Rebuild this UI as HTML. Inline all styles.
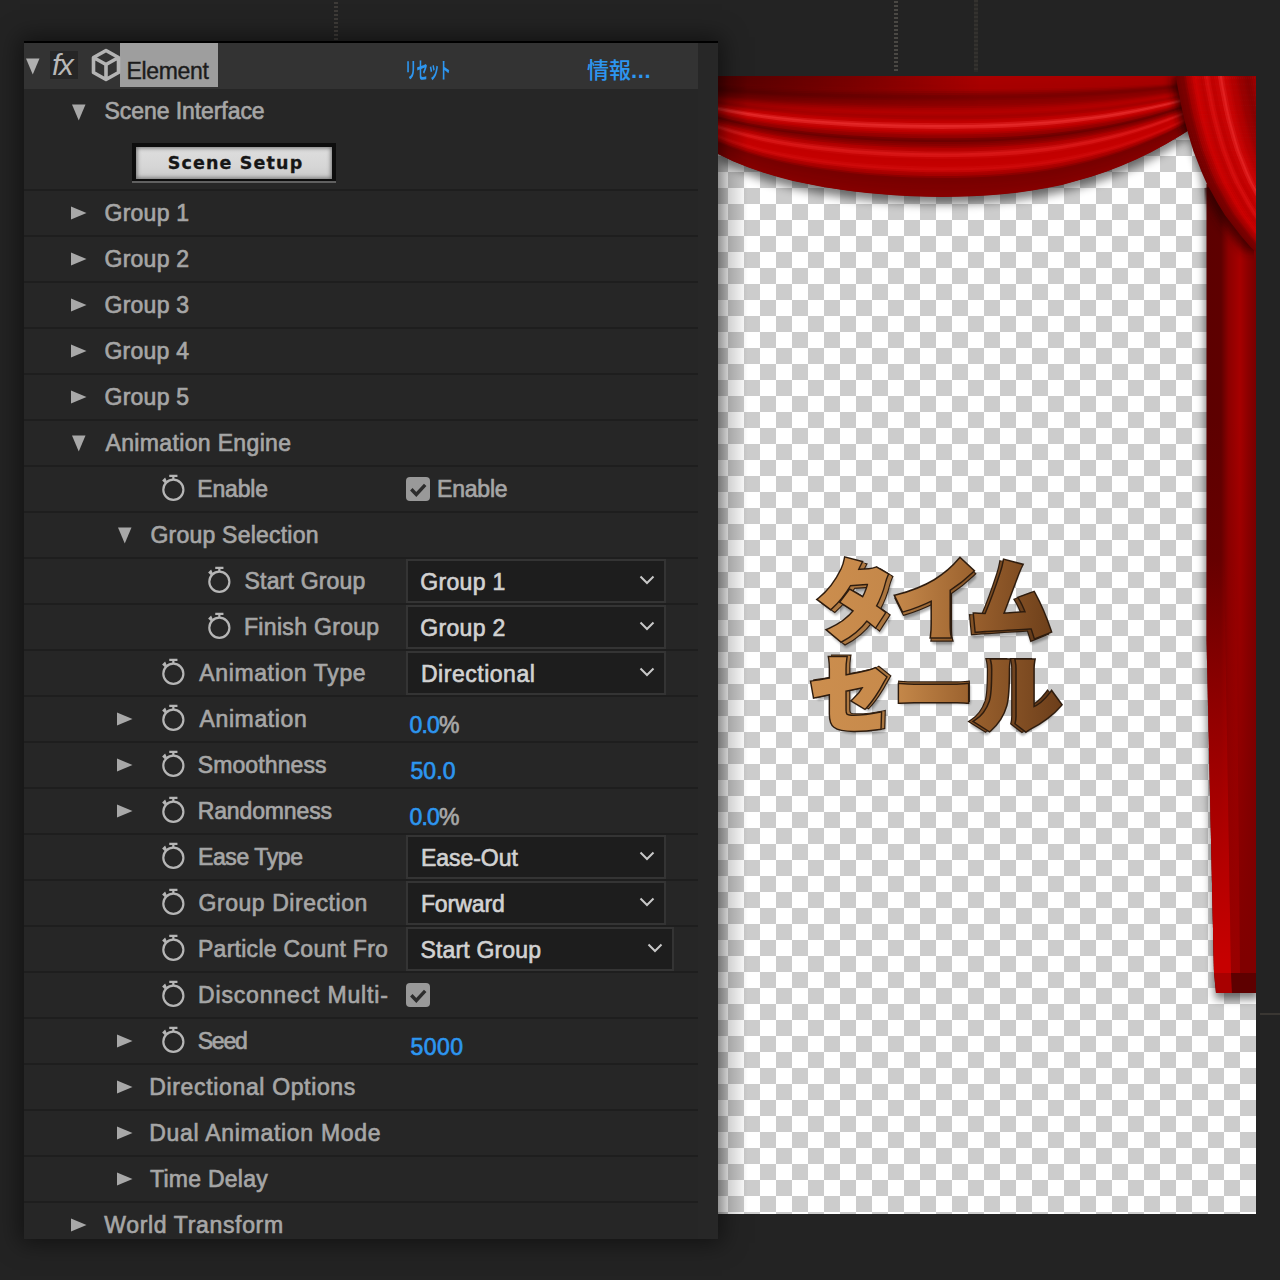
<!DOCTYPE html>
<html lang="ja"><head><meta charset="utf-8"><title>Element</title>
<style>
html,body{margin:0;padding:0;}
body{width:1280px;height:1280px;overflow:hidden;background:#232323;position:relative;font-family:"Liberation Sans", "Noto Sans CJK JP", sans-serif;}
.ab{position:absolute;display:block;}
#shadow{position:absolute;left:24px;top:41px;width:694px;height:1198px;box-shadow:0 0 22px 4px rgba(0,0,0,.5);}
#panel{position:absolute;left:24px;top:41px;width:694px;height:1198px;background:#272727;overflow:hidden;}
#panel .in{position:absolute;left:-24px;top:-41px;width:1280px;height:1280px;}
#rows{position:absolute;left:24px;top:43px;width:674px;height:1196px;background:#262626;}
#topline{position:absolute;left:24px;top:41px;width:694px;height:2px;background:#000;}
#hdr{position:absolute;left:24px;top:43px;width:674px;height:46px;background:#333333;}
#sel{position:absolute;left:120px;top:43px;width:98px;height:44px;background:#9e9e9e;}
.dv{position:absolute;left:24px;width:674px;height:2px;background:#1e1e1e;}
.lb{position:absolute;white-space:nowrap;font-size:23px;line-height:32px;height:32px;color:#a6a6a6;letter-spacing:0px;-webkit-text-stroke:0.65px #a6a6a6;}
.num{position:absolute;white-space:nowrap;font-size:23px;line-height:32px;height:32px;color:#2d96f0;-webkit-text-stroke:0.65px #2d96f0;}
.num .pc{color:#a8a8a8;-webkit-text-stroke:0.65px #a8a8a8;}
.dd{position:absolute;height:44px;box-sizing:border-box;background:#1d1d1d;border:2px solid #343434;}
.ddt{position:absolute;left:13px;top:4.5px;font-size:23px;line-height:32px;color:#d2d2d2;white-space:nowrap;-webkit-text-stroke:0.65px #d2d2d2;}
.chev{position:absolute;right:9px;top:14px;}
.cb{position:absolute;width:24px;height:24px;background:#999999;border-radius:4px;}
.cb svg{display:block;}
</style></head><body>
<div class="ab" style="left:334px;top:2px;width:4px;height:40px;background:repeating-linear-gradient(#3e3b38 0 2px,transparent 2px 4px);"></div>
<div class="ab" style="left:894px;top:1px;width:4px;height:71px;background:repeating-linear-gradient(#4a4844 0 2px,transparent 2px 4px);"></div>
<div class="ab" style="left:974px;top:0px;width:4px;height:72px;background:repeating-linear-gradient(#34322f 0 2px,#2a2927 2px 4px);"></div>
<div class="ab" style="left:1260px;top:1013px;width:20px;height:2px;background:#3a3733;"></div>
<div id="shadow"></div>
<div id="panel"><div class="in">
<div id="rows"></div>
<div id="hdr"></div>
<div id="sel"></div>
<svg class="ab" style="left:26px;top:58px" width="14" height="17" viewBox="0 0 14 17"><path d="M0 0.5 L13.5 0.5 L6.75 16.5 Z" fill="#b0b0b0"/></svg>
<div class="ab" style="left:50px;top:51px;width:28px;height:28px;background:#262626;"></div>
<div class="ab" id="fx" style="left:52px;top:49px;font-family:'Liberation Sans',sans-serif;font-style:italic;font-size:30px;line-height:32px;color:#b8b8b8;letter-spacing:-1.5px;">fx</div>
<svg class="ab" style="left:91px;top:48px" width="30" height="34" viewBox="0 0 30 34"><path d="M15 2.5 L27.5 9.5 V24.5 L15 31.5 L2.5 24.5 V9.5 Z M2.5 9.5 L15 16.5 L27.5 9.5 M15 16.5 V31.5" fill="none" stroke="#b4b4b4" stroke-width="3.6" stroke-linejoin="round"/></svg>
<div class="lb" id="el" style="left:126px;top:55px;color:#1c1c1c;-webkit-text-stroke:0.4px #1c1c1c;margin-left:0.50px;letter-spacing:-0.333px;">Element</div>
<div class="ab" id="reset" style="left:405px;top:55px;font-size:22px;line-height:32px;font-weight:700;color:#2d96f0;white-space:nowrap;transform-origin:0 50%;transform:scaleX(.52);">リセット</div>
<div class="ab" id="info" style="left:587px;top:55px;font-size:22px;line-height:32px;font-weight:500;color:#2d96f0;white-space:nowrap;">情報<span style="font-weight:bold;letter-spacing:0.6px;">...</span></div>
<svg class="ab" style="left:72px;top:103.5px" width="14" height="17" viewBox="0 0 14 17"><path d="M0 0.5 L13.5 0.5 L6.75 16.5 Z" fill="#a8a8a8"/></svg>
<div class="lb" id="si" style="left:104px;top:95px;margin-left:0.50px;letter-spacing:-0.071px;">Scene Interface</div>
<div class="ab" id="btn" style="left:132px;top:143px;width:204px;height:40px;background:#606060;"><div style="position:absolute;left:0;top:0;right:0;height:38px;background:#0d0d0d;"></div><div style="position:absolute;left:4px;top:4px;width:196px;height:32px;background:linear-gradient(#dedede,#d6d6d6 60%,#cacaca);box-shadow:inset 0 0 4px 1px #6e6e6e;"></div><div id="btnt" style="position:absolute;left:3px;right:0;top:8px;text-align:center;font-family:'DejaVu Sans','Liberation Sans',sans-serif;font-weight:bold;font-size:17.5px;line-height:24px;letter-spacing:1.15px;color:#161616;-webkit-text-stroke:0.3px #161616;">Scene Setup</div></div>
<div class="dv" style="top:189px"></div>
<div class="dv" style="top:235px"></div>
<div class="dv" style="top:281px"></div>
<div class="dv" style="top:327px"></div>
<div class="dv" style="top:373px"></div>
<div class="dv" style="top:419px"></div>
<div class="dv" style="top:465px"></div>
<div class="dv" style="top:511px"></div>
<div class="dv" style="top:557px"></div>
<div class="dv" style="top:603px"></div>
<div class="dv" style="top:649px"></div>
<div class="dv" style="top:695px"></div>
<div class="dv" style="top:741px"></div>
<div class="dv" style="top:787px"></div>
<div class="dv" style="top:833px"></div>
<div class="dv" style="top:879px"></div>
<div class="dv" style="top:925px"></div>
<div class="dv" style="top:971px"></div>
<div class="dv" style="top:1017px"></div>
<div class="dv" style="top:1063px"></div>
<div class="dv" style="top:1109px"></div>
<div class="dv" style="top:1155px"></div>
<div class="dv" style="top:1201px"></div>
<svg class="ab" style="left:71px;top:206px" width="16" height="14" viewBox="0 0 16 14"><path d="M0 0.5 L15.5 7 L0 13.5 Z" fill="#a8a8a8"/></svg>
<div class="lb" id="l0" style="left:104px;top:197px;margin-left:0.50px;letter-spacing:0.250px;">Group 1</div>
<svg class="ab" style="left:71px;top:252px" width="16" height="14" viewBox="0 0 16 14"><path d="M0 0.5 L15.5 7 L0 13.5 Z" fill="#a8a8a8"/></svg>
<div class="lb" id="l1" style="left:104px;top:243px;margin-left:0.50px;letter-spacing:0.250px;">Group 2</div>
<svg class="ab" style="left:71px;top:298px" width="16" height="14" viewBox="0 0 16 14"><path d="M0 0.5 L15.5 7 L0 13.5 Z" fill="#a8a8a8"/></svg>
<div class="lb" id="l2" style="left:104px;top:289px;margin-left:0.50px;letter-spacing:0.250px;">Group 3</div>
<svg class="ab" style="left:71px;top:344px" width="16" height="14" viewBox="0 0 16 14"><path d="M0 0.5 L15.5 7 L0 13.5 Z" fill="#a8a8a8"/></svg>
<div class="lb" id="l3" style="left:104px;top:335px;margin-left:0.50px;letter-spacing:0.233px;">Group 4</div>
<svg class="ab" style="left:71px;top:390px" width="16" height="14" viewBox="0 0 16 14"><path d="M0 0.5 L15.5 7 L0 13.5 Z" fill="#a8a8a8"/></svg>
<div class="lb" id="l4" style="left:104px;top:381px;margin-left:0.50px;letter-spacing:0.250px;">Group 5</div>
<svg class="ab" style="left:72px;top:435px" width="14" height="17" viewBox="0 0 14 17"><path d="M0 0.5 L13.5 0.5 L6.75 16.5 Z" fill="#a8a8a8"/></svg>
<div class="lb" id="l5" style="left:104px;top:427px;margin-left:1.50px;letter-spacing:0.350px;">Animation Engine</div>
<svg class="ab" style="left:159.75px;top:474.25px" width="28" height="30" viewBox="0 0 28 30"><circle cx="13.35" cy="15.75" r="10.05" fill="none" stroke="#b6b6b6" stroke-width="2.2"/><path d="M9.25 1.8 H17.45 M13.35 1.8 V6" fill="none" stroke="#b6b6b6" stroke-width="2.2"/><path d="M2.1 6.4 L5.1 3.4 L7 7.6 L4.6 9 Z" fill="#b6b6b6"/></svg>
<div class="lb" id="l6" style="left:198px;top:473px;margin-left:-0.75px;letter-spacing:-0.150px;">Enable</div>
<svg class="ab" style="left:118px;top:527px" width="14" height="17" viewBox="0 0 14 17"><path d="M0 0.5 L13.5 0.5 L6.75 16.5 Z" fill="#a8a8a8"/></svg>
<div class="lb" id="l7" style="left:150px;top:519px;margin-left:0.50px;letter-spacing:0.214px;">Group Selection</div>
<svg class="ab" style="left:205.75px;top:566.25px" width="28" height="30" viewBox="0 0 28 30"><circle cx="13.35" cy="15.75" r="10.05" fill="none" stroke="#b6b6b6" stroke-width="2.2"/><path d="M9.25 1.8 H17.45 M13.35 1.8 V6" fill="none" stroke="#b6b6b6" stroke-width="2.2"/><path d="M2.1 6.4 L5.1 3.4 L7 7.6 L4.6 9 Z" fill="#b6b6b6"/></svg>
<div class="lb" id="l8" style="left:244px;top:565px;margin-left:0.50px;letter-spacing:0.200px;">Start Group</div>
<svg class="ab" style="left:205.75px;top:612.25px" width="28" height="30" viewBox="0 0 28 30"><circle cx="13.35" cy="15.75" r="10.05" fill="none" stroke="#b6b6b6" stroke-width="2.2"/><path d="M9.25 1.8 H17.45 M13.35 1.8 V6" fill="none" stroke="#b6b6b6" stroke-width="2.2"/><path d="M2.1 6.4 L5.1 3.4 L7 7.6 L4.6 9 Z" fill="#b6b6b6"/></svg>
<div class="lb" id="l9" style="left:244px;top:611px;margin-left:0.00px;letter-spacing:0.318px;">Finish Group</div>
<svg class="ab" style="left:159.75px;top:658.25px" width="28" height="30" viewBox="0 0 28 30"><circle cx="13.35" cy="15.75" r="10.05" fill="none" stroke="#b6b6b6" stroke-width="2.2"/><path d="M9.25 1.8 H17.45 M13.35 1.8 V6" fill="none" stroke="#b6b6b6" stroke-width="2.2"/><path d="M2.1 6.4 L5.1 3.4 L7 7.6 L4.6 9 Z" fill="#b6b6b6"/></svg>
<div class="lb" id="l10" style="left:198px;top:657px;margin-left:1.25px;letter-spacing:0.635px;">Animation Type</div>
<svg class="ab" style="left:117px;top:712px" width="16" height="14" viewBox="0 0 16 14"><path d="M0 0.5 L15.5 7 L0 13.5 Z" fill="#a8a8a8"/></svg>
<svg class="ab" style="left:159.75px;top:704.25px" width="28" height="30" viewBox="0 0 28 30"><circle cx="13.35" cy="15.75" r="10.05" fill="none" stroke="#b6b6b6" stroke-width="2.2"/><path d="M9.25 1.8 H17.45 M13.35 1.8 V6" fill="none" stroke="#b6b6b6" stroke-width="2.2"/><path d="M2.1 6.4 L5.1 3.4 L7 7.6 L4.6 9 Z" fill="#b6b6b6"/></svg>
<div class="lb" id="l11" style="left:198px;top:703px;margin-left:1.50px;letter-spacing:0.625px;">Animation</div>
<svg class="ab" style="left:117px;top:758px" width="16" height="14" viewBox="0 0 16 14"><path d="M0 0.5 L15.5 7 L0 13.5 Z" fill="#a8a8a8"/></svg>
<svg class="ab" style="left:159.75px;top:750.25px" width="28" height="30" viewBox="0 0 28 30"><circle cx="13.35" cy="15.75" r="10.05" fill="none" stroke="#b6b6b6" stroke-width="2.2"/><path d="M9.25 1.8 H17.45 M13.35 1.8 V6" fill="none" stroke="#b6b6b6" stroke-width="2.2"/><path d="M2.1 6.4 L5.1 3.4 L7 7.6 L4.6 9 Z" fill="#b6b6b6"/></svg>
<div class="lb" id="l12" style="left:198px;top:749px;margin-left:-0.25px;letter-spacing:0.111px;">Smoothness</div>
<svg class="ab" style="left:117px;top:804px" width="16" height="14" viewBox="0 0 16 14"><path d="M0 0.5 L15.5 7 L0 13.5 Z" fill="#a8a8a8"/></svg>
<svg class="ab" style="left:159.75px;top:796.25px" width="28" height="30" viewBox="0 0 28 30"><circle cx="13.35" cy="15.75" r="10.05" fill="none" stroke="#b6b6b6" stroke-width="2.2"/><path d="M9.25 1.8 H17.45 M13.35 1.8 V6" fill="none" stroke="#b6b6b6" stroke-width="2.2"/><path d="M2.1 6.4 L5.1 3.4 L7 7.6 L4.6 9 Z" fill="#b6b6b6"/></svg>
<div class="lb" id="l13" style="left:198px;top:795px;margin-left:-0.25px;letter-spacing:-0.139px;">Randomness</div>
<svg class="ab" style="left:159.75px;top:842.25px" width="28" height="30" viewBox="0 0 28 30"><circle cx="13.35" cy="15.75" r="10.05" fill="none" stroke="#b6b6b6" stroke-width="2.2"/><path d="M9.25 1.8 H17.45 M13.35 1.8 V6" fill="none" stroke="#b6b6b6" stroke-width="2.2"/><path d="M2.1 6.4 L5.1 3.4 L7 7.6 L4.6 9 Z" fill="#b6b6b6"/></svg>
<div class="lb" id="l14" style="left:198px;top:841px;margin-left:0.00px;letter-spacing:-0.406px;">Ease Type</div>
<svg class="ab" style="left:159.75px;top:888.25px" width="28" height="30" viewBox="0 0 28 30"><circle cx="13.35" cy="15.75" r="10.05" fill="none" stroke="#b6b6b6" stroke-width="2.2"/><path d="M9.25 1.8 H17.45 M13.35 1.8 V6" fill="none" stroke="#b6b6b6" stroke-width="2.2"/><path d="M2.1 6.4 L5.1 3.4 L7 7.6 L4.6 9 Z" fill="#b6b6b6"/></svg>
<div class="lb" id="l15" style="left:198px;top:887px;margin-left:0.50px;letter-spacing:0.554px;">Group Direction</div>
<svg class="ab" style="left:159.75px;top:934.25px" width="28" height="30" viewBox="0 0 28 30"><circle cx="13.35" cy="15.75" r="10.05" fill="none" stroke="#b6b6b6" stroke-width="2.2"/><path d="M9.25 1.8 H17.45 M13.35 1.8 V6" fill="none" stroke="#b6b6b6" stroke-width="2.2"/><path d="M2.1 6.4 L5.1 3.4 L7 7.6 L4.6 9 Z" fill="#b6b6b6"/></svg>
<div class="lb" id="l16" style="left:198px;top:933px;margin-left:0.00px;letter-spacing:0.265px;">Particle Count Fro</div>
<svg class="ab" style="left:159.75px;top:980.25px" width="28" height="30" viewBox="0 0 28 30"><circle cx="13.35" cy="15.75" r="10.05" fill="none" stroke="#b6b6b6" stroke-width="2.2"/><path d="M9.25 1.8 H17.45 M13.35 1.8 V6" fill="none" stroke="#b6b6b6" stroke-width="2.2"/><path d="M2.1 6.4 L5.1 3.4 L7 7.6 L4.6 9 Z" fill="#b6b6b6"/></svg>
<div class="lb" id="l17" style="left:198px;top:979px;margin-left:0.00px;letter-spacing:0.844px;">Disconnect Multi-</div>
<svg class="ab" style="left:117px;top:1034px" width="16" height="14" viewBox="0 0 16 14"><path d="M0 0.5 L15.5 7 L0 13.5 Z" fill="#a8a8a8"/></svg>
<svg class="ab" style="left:159.75px;top:1026.25px" width="28" height="30" viewBox="0 0 28 30"><circle cx="13.35" cy="15.75" r="10.05" fill="none" stroke="#b6b6b6" stroke-width="2.2"/><path d="M9.25 1.8 H17.45 M13.35 1.8 V6" fill="none" stroke="#b6b6b6" stroke-width="2.2"/><path d="M2.1 6.4 L5.1 3.4 L7 7.6 L4.6 9 Z" fill="#b6b6b6"/></svg>
<div class="lb" id="l18" style="left:198px;top:1025px;margin-left:-0.25px;letter-spacing:-1.250px;">Seed</div>
<svg class="ab" style="left:117px;top:1080px" width="16" height="14" viewBox="0 0 16 14"><path d="M0 0.5 L15.5 7 L0 13.5 Z" fill="#a8a8a8"/></svg>
<div class="lb" id="l19" style="left:150px;top:1071px;margin-left:-0.75px;letter-spacing:0.653px;">Directional Options</div>
<svg class="ab" style="left:117px;top:1126px" width="16" height="14" viewBox="0 0 16 14"><path d="M0 0.5 L15.5 7 L0 13.5 Z" fill="#a8a8a8"/></svg>
<div class="lb" id="l20" style="left:150px;top:1117px;margin-left:-0.75px;letter-spacing:0.708px;">Dual Animation Mode</div>
<svg class="ab" style="left:117px;top:1172px" width="16" height="14" viewBox="0 0 16 14"><path d="M0 0.5 L15.5 7 L0 13.5 Z" fill="#a8a8a8"/></svg>
<div class="lb" id="l21" style="left:150px;top:1163px;margin-left:0.00px;letter-spacing:0.250px;">Time Delay</div>
<svg class="ab" style="left:71px;top:1218px" width="16" height="14" viewBox="0 0 16 14"><path d="M0 0.5 L15.5 7 L0 13.5 Z" fill="#a8a8a8"/></svg>
<div class="lb" id="l22" style="left:104px;top:1209px;margin-left:0.25px;letter-spacing:0.661px;">World Transform</div>
<div class="cb" style="left:406px;top:477px"><svg width="24" height="24" viewBox="0 0 24 24"><path d="M5.3 12.3 L10.3 17.5 L19.2 7.9" fill="none" stroke="#2c2c2c" stroke-width="3.4"/></svg></div>
<div class="lb" id="v6" style="left:438px;top:473px;margin-left:-0.90px;letter-spacing:-0.220px;">Enable</div>
<div class="dd" style="left:406px;top:559px;width:260px"><span class="ddt" id="d8" style="margin-left:-0.80px;letter-spacing:0.342px;">Group 1</span><svg class="chev" width="16" height="10" viewBox="0 0 16 10"><path d="M1.5 1.5 L8 8 L14.5 1.5" fill="none" stroke="#c8c8c8" stroke-width="2"/></svg></div>
<div class="dd" style="left:406px;top:605px;width:260px"><span class="ddt" id="d9" style="margin-left:-0.80px;letter-spacing:0.342px;">Group 2</span><svg class="chev" width="16" height="10" viewBox="0 0 16 10"><path d="M1.5 1.5 L8 8 L14.5 1.5" fill="none" stroke="#c8c8c8" stroke-width="2"/></svg></div>
<div class="dd" style="left:406px;top:651px;width:260px"><span class="ddt" id="d10" style="margin-left:-0.10px;letter-spacing:0.530px;">Directional</span><svg class="chev" width="16" height="10" viewBox="0 0 16 10"><path d="M1.5 1.5 L8 8 L14.5 1.5" fill="none" stroke="#c8c8c8" stroke-width="2"/></svg></div>
<div class="num" id="n11" style="left:408px;top:709px;margin-left:1.60px;letter-spacing:-0.867px;">0.0<span class="pc">%</span></div>
<div class="num" id="n12" style="left:408px;top:755px;margin-left:2.40px;letter-spacing:0.133px;">50.0</div>
<div class="num" id="n13" style="left:408px;top:801px;margin-left:1.60px;letter-spacing:-0.867px;">0.0<span class="pc">%</span></div>
<div class="dd" style="left:406px;top:835px;width:260px"><span class="ddt" id="d14" style="margin-left:-0.10px;letter-spacing:-0.029px;">Ease-Out</span><svg class="chev" width="16" height="10" viewBox="0 0 16 10"><path d="M1.5 1.5 L8 8 L14.5 1.5" fill="none" stroke="#c8c8c8" stroke-width="2"/></svg></div>
<div class="dd" style="left:406px;top:881px;width:260px"><span class="ddt" id="d15" style="margin-left:-0.10px;letter-spacing:-0.083px;">Forward</span><svg class="chev" width="16" height="10" viewBox="0 0 16 10"><path d="M1.5 1.5 L8 8 L14.5 1.5" fill="none" stroke="#c8c8c8" stroke-width="2"/></svg></div>
<div class="dd" style="left:406px;top:927px;width:268px"><span class="ddt" id="d16" style="margin-left:-0.50px;letter-spacing:0.170px;">Start Group</span><svg class="chev" width="16" height="10" viewBox="0 0 16 10"><path d="M1.5 1.5 L8 8 L14.5 1.5" fill="none" stroke="#c8c8c8" stroke-width="2"/></svg></div>
<div class="cb" style="left:406px;top:983px"><svg width="24" height="24" viewBox="0 0 24 24"><path d="M5.3 12.3 L10.3 17.5 L19.2 7.9" fill="none" stroke="#2c2c2c" stroke-width="3.4"/></svg></div>
<div class="num" id="n18" style="left:408px;top:1031px;margin-left:2.40px;letter-spacing:0.467px;">5000</div>
</div></div>
<div id="topline"></div>
<svg id="cv" class="ab" style="left:718px;top:76px" width="538" height="1138" viewBox="718 76 538 1138">
<defs>
<pattern id="chk" x="728" y="76" width="32" height="32" patternUnits="userSpaceOnUse"><rect width="32" height="32" fill="#fff"/><rect width="16" height="16" fill="#cccccc"/><rect x="16" y="16" width="16" height="16" fill="#cccccc"/></pattern>
<linearGradient id="lsh" x1="0" x2="1" y1="0" y2="0"><stop offset="0" stop-color="#000" stop-opacity=".42"/><stop offset=".35" stop-color="#000" stop-opacity=".18"/><stop offset="1" stop-color="#000" stop-opacity="0"/></linearGradient>
<filter id="ds" x="-10%" y="-10%" width="120%" height="140%"><feGaussianBlur stdDeviation="5"/></filter>
<filter id="ds2" x="-50%" y="-5%" width="200%" height="110%"><feGaussianBlur stdDeviation="4"/></filter>
<filter id="b5" x="-50%" y="-20%" width="200%" height="140%"><feGaussianBlur stdDeviation="5"/></filter><filter id="b1" x="-20%" y="-20%" width="140%" height="140%"><feGaussianBlur stdDeviation="1.2"/></filter>
<linearGradient id="back" gradientUnits="userSpaceOnUse" x1="1206" x2="1256" y1="0" y2="0"><stop offset="0" stop-color="#5c0000"/><stop offset=".3" stop-color="#5e0000"/><stop offset=".45" stop-color="#8c0000"/><stop offset=".68" stop-color="#a60000"/><stop offset=".85" stop-color="#8a0000"/><stop offset="1" stop-color="#780000"/></linearGradient>
<linearGradient id="backlo" gradientUnits="userSpaceOnUse" x1="0" x2="0" y1="420" y2="960"><stop offset="0" stop-color="#800000" stop-opacity="0"/><stop offset="1" stop-color="#800000" stop-opacity="1"/></linearGradient>
<linearGradient id="stripe" gradientUnits="userSpaceOnUse" x1="0" x2="0" y1="560" y2="960"><stop offset="0" stop-color="#c40000" stop-opacity="0"/><stop offset="1" stop-color="#c60000" stop-opacity="1"/></linearGradient>
<linearGradient id="txg" gradientUnits="userSpaceOnUse" x1="810" x2="1062" y1="0" y2="0"><stop offset="0" stop-color="#c98a4a"/><stop offset=".3" stop-color="#c88b4c"/><stop offset=".6" stop-color="#9a5f2c"/><stop offset="1" stop-color="#6e401c"/></linearGradient>
<linearGradient id="vald" gradientUnits="userSpaceOnUse" x1="718" x2="980" y1="0" y2="0"><stop offset="0" stop-color="#2a0000" stop-opacity=".72"/><stop offset=".5" stop-color="#2a0000" stop-opacity=".4"/><stop offset="1" stop-color="#2a0000" stop-opacity="0"/></linearGradient>
<linearGradient id="valv" gradientUnits="userSpaceOnUse" x1="0" x2="0" y1="76" y2="112"><stop offset="0" stop-color="#fff" stop-opacity="1"/><stop offset=".3" stop-color="#fff" stop-opacity=".9"/><stop offset="1" stop-color="#fff" stop-opacity="0"/></linearGradient>
<clipPath id="cc"><rect x="718" y="76" width="538" height="1138"/></clipPath>
<clipPath id="cb"><path d="M1206.5 184 L1206.5 640 L1214 973 L1256 973 L1256 176 Z"/></clipPath></defs>
<rect x="718" y="76" width="538" height="1138" fill="url(#chk)"/>
<g clip-path="url(#cc)">
<path d="M718 76 L718.0 161.1 L732.9 168.2 L747.9 174.3 L762.8 179.5 L777.8 184.0 L792.7 187.9 L807.6 191.1 L822.6 193.9 L837.5 196.3 L852.4 198.3 L867.4 200.0 L882.3 201.3 L897.2 202.4 L912.2 203.2 L927.1 203.7 L942.1 203.9 L957.0 203.8 L971.9 203.3 L986.9 202.5 L1001.8 201.3 L1016.8 199.7 L1031.7 197.6 L1046.6 195.0 L1061.6 191.9 L1076.5 188.1 L1091.4 183.8 L1106.4 178.7 L1121.3 173.0 L1136.2 166.5 L1151.2 159.2 L1166.1 151.1 L1181.1 142.2 L1196.0 132.4 L1196 76 Z" fill="#000" opacity=".5" filter="url(#ds)"/>
<path d="M1180 76 L1190 132 L1204 172 L1208 200 L1208 640 L1217 975 L1218 996 L1262 996 L1262 76 Z" fill="#000" opacity=".5" filter="url(#ds2)" transform="translate(-3,3)"/>
<path d="M718 76.0 L733 76.0 L748 76.0 L763 76.0 L778 76.0 L793 76.0 L808 76.0 L823 76.0 L838 76.0 L852 76.0 L867 76.0 L882 76.0 L897 76.0 L912 76.0 L927 76.0 L942 76.0 L957 76.0 L972 76.0 L987 76.0 L1002 76.0 L1017 76.0 L1032 76.0 L1047 76.0 L1062 76.0 L1076 76.0 L1091 76.0 L1106 76.0 L1121 76.0 L1136 76.0 L1151 76.0 L1166 76.0 L1181 76.0 L1196 76.0 L1196 77.4 L1181 77.6 L1166 77.9 L1151 78.1 L1136 78.3 L1121 78.5 L1106 78.6 L1091 78.8 L1076 78.9 L1062 79.0 L1047 79.1 L1032 79.2 L1017 79.2 L1002 79.3 L987 79.3 L972 79.3 L957 79.3 L942 79.3 L927 79.3 L912 79.3 L897 79.3 L882 79.3 L867 79.2 L852 79.2 L838 79.1 L823 79.1 L808 79.0 L793 78.9 L778 78.8 L763 78.7 L748 78.5 L733 78.4 L718 78.2Z" fill="#aa0000"/>
<path d="M718 77.2 L733 77.3 L748 77.4 L763 77.5 L778 77.6 L793 77.6 L808 77.7 L823 77.7 L838 77.8 L852 77.8 L867 77.8 L882 77.8 L897 77.9 L912 77.9 L927 77.9 L942 77.9 L957 77.9 L972 77.9 L987 77.9 L1002 77.8 L1017 77.8 L1032 77.8 L1047 77.7 L1062 77.7 L1076 77.6 L1091 77.6 L1106 77.5 L1121 77.4 L1136 77.3 L1151 77.2 L1166 77.1 L1181 76.9 L1196 76.8 L1196 78.1 L1181 78.6 L1166 78.9 L1151 79.3 L1136 79.6 L1121 79.9 L1106 80.1 L1091 80.4 L1076 80.5 L1062 80.7 L1047 80.8 L1032 81.0 L1017 81.0 L1002 81.1 L987 81.2 L972 81.2 L957 81.2 L942 81.2 L927 81.2 L912 81.2 L897 81.2 L882 81.1 L867 81.1 L852 81.0 L838 80.9 L823 80.8 L808 80.7 L793 80.5 L778 80.4 L763 80.2 L748 79.9 L733 79.7 L718 79.4Z" fill="#a90000"/>
<path d="M718 78.4 L733 78.7 L748 78.9 L763 79.0 L778 79.2 L793 79.3 L808 79.4 L823 79.5 L838 79.5 L852 79.6 L867 79.7 L882 79.7 L897 79.7 L912 79.8 L927 79.8 L942 79.8 L957 79.8 L972 79.8 L987 79.7 L1002 79.7 L1017 79.6 L1032 79.6 L1047 79.5 L1062 79.4 L1076 79.3 L1091 79.1 L1106 79.0 L1121 78.8 L1136 78.6 L1151 78.4 L1166 78.1 L1181 77.8 L1196 77.5 L1196 78.9 L1181 79.5 L1166 80.0 L1151 80.5 L1136 80.9 L1121 81.3 L1106 81.6 L1091 81.9 L1076 82.2 L1062 82.4 L1047 82.6 L1032 82.7 L1017 82.9 L1002 83.0 L987 83.0 L972 83.1 L957 83.1 L942 83.1 L927 83.1 L912 83.1 L897 83.0 L882 83.0 L867 82.9 L852 82.8 L838 82.7 L823 82.5 L808 82.4 L793 82.2 L778 81.9 L763 81.7 L748 81.4 L733 81.0 L718 80.6Z" fill="#a90000"/>
<path d="M718 79.7 L733 80.0 L748 80.3 L763 80.5 L778 80.7 L793 80.9 L808 81.1 L823 81.2 L838 81.3 L852 81.4 L867 81.5 L882 81.5 L897 81.6 L912 81.6 L927 81.7 L942 81.7 L957 81.7 L972 81.6 L987 81.6 L1002 81.5 L1017 81.5 L1032 81.4 L1047 81.2 L1062 81.1 L1076 80.9 L1091 80.7 L1106 80.5 L1121 80.2 L1136 79.9 L1151 79.6 L1166 79.2 L1181 78.8 L1196 78.3 L1196 79.7 L1181 80.4 L1166 81.1 L1151 81.7 L1136 82.2 L1121 82.7 L1106 83.1 L1091 83.5 L1076 83.8 L1062 84.1 L1047 84.3 L1032 84.5 L1017 84.7 L1002 84.8 L987 84.9 L972 85.0 L957 85.0 L942 85.0 L927 85.0 L912 85.0 L897 84.9 L882 84.8 L867 84.7 L852 84.6 L838 84.4 L823 84.3 L808 84.1 L793 83.8 L778 83.5 L763 83.2 L748 82.8 L733 82.3 L718 81.8Z" fill="#a80000"/>
<path d="M718 80.9 L733 81.3 L748 81.7 L763 82.0 L778 82.3 L793 82.6 L808 82.8 L823 82.9 L838 83.1 L852 83.2 L867 83.3 L882 83.4 L897 83.5 L912 83.5 L927 83.5 L942 83.6 L957 83.5 L972 83.5 L987 83.5 L1002 83.4 L1017 83.3 L1032 83.2 L1047 83.0 L1062 82.8 L1076 82.6 L1091 82.3 L1106 82.0 L1121 81.6 L1136 81.2 L1151 80.8 L1166 80.3 L1181 79.7 L1196 79.1 L1196 80.5 L1181 81.3 L1166 82.1 L1151 82.9 L1136 83.5 L1121 84.1 L1106 84.6 L1091 85.1 L1076 85.5 L1062 85.8 L1047 86.1 L1032 86.3 L1017 86.5 L1002 86.7 L987 86.8 L972 86.8 L957 86.9 L942 86.9 L927 86.9 L912 86.8 L897 86.8 L882 86.7 L867 86.5 L852 86.4 L838 86.2 L823 86.0 L808 85.7 L793 85.4 L778 85.1 L763 84.7 L748 84.2 L733 83.7 L718 83.0Z" fill="#a70000"/>
<path d="M718 82.1 L733 82.7 L748 83.1 L763 83.5 L778 83.9 L793 84.2 L808 84.4 L823 84.7 L838 84.9 L852 85.0 L867 85.1 L882 85.2 L897 85.3 L912 85.4 L927 85.4 L942 85.4 L957 85.4 L972 85.4 L987 85.3 L1002 85.2 L1017 85.1 L1032 85.0 L1047 84.7 L1062 84.5 L1076 84.2 L1091 83.9 L1106 83.5 L1121 83.0 L1136 82.5 L1151 82.0 L1166 81.3 L1181 80.6 L1196 79.9 L1196 81.2 L1181 82.3 L1166 83.2 L1151 84.1 L1136 84.8 L1121 85.5 L1106 86.1 L1091 86.7 L1076 87.1 L1062 87.5 L1047 87.8 L1032 88.1 L1017 88.3 L1002 88.5 L987 88.6 L972 88.7 L957 88.8 L942 88.8 L927 88.8 L912 88.7 L897 88.6 L882 88.5 L867 88.4 L852 88.2 L838 88.0 L823 87.7 L808 87.4 L793 87.1 L778 86.7 L763 86.2 L748 85.7 L733 85.0 L718 84.3Z" fill="#a60000"/>
<path d="M718 83.3 L733 84.0 L748 84.6 L763 85.0 L778 85.5 L793 85.8 L808 86.1 L823 86.4 L838 86.6 L852 86.8 L867 87.0 L882 87.1 L897 87.2 L912 87.3 L927 87.3 L942 87.3 L957 87.3 L972 87.3 L987 87.2 L1002 87.1 L1017 86.9 L1032 86.7 L1047 86.5 L1062 86.2 L1076 85.9 L1091 85.4 L1106 85.0 L1121 84.4 L1136 83.8 L1151 83.1 L1166 82.4 L1181 81.5 L1196 80.6 L1196 82.0 L1181 83.2 L1166 84.3 L1151 85.2 L1136 86.1 L1121 86.9 L1106 87.6 L1091 88.2 L1076 88.8 L1062 89.2 L1047 89.6 L1032 89.9 L1017 90.2 L1002 90.4 L987 90.5 L972 90.6 L957 90.7 L942 90.7 L927 90.6 L912 90.6 L897 90.5 L882 90.4 L867 90.2 L852 90.0 L838 89.8 L823 89.5 L808 89.1 L793 88.7 L778 88.3 L763 87.7 L748 87.1 L733 86.3 L718 85.5Z" fill="#a60000"/>
<path d="M718 84.5 L733 85.3 L748 86.0 L763 86.6 L778 87.0 L793 87.5 L808 87.8 L823 88.1 L838 88.4 L852 88.6 L867 88.8 L882 88.9 L897 89.1 L912 89.1 L927 89.2 L942 89.2 L957 89.2 L972 89.2 L987 89.1 L1002 88.9 L1017 88.8 L1032 88.5 L1047 88.2 L1062 87.9 L1076 87.5 L1091 87.0 L1106 86.5 L1121 85.8 L1136 85.1 L1151 84.3 L1166 83.5 L1181 82.5 L1196 81.4 L1196 82.8 L1181 84.1 L1166 85.3 L1151 86.4 L1136 87.4 L1121 88.3 L1106 89.1 L1091 89.8 L1076 90.4 L1062 90.9 L1047 91.3 L1032 91.7 L1017 92.0 L1002 92.2 L987 92.4 L972 92.5 L957 92.5 L942 92.6 L927 92.5 L912 92.5 L897 92.4 L882 92.2 L867 92.0 L852 91.8 L838 91.5 L823 91.2 L808 90.8 L793 90.4 L778 89.8 L763 89.2 L748 88.5 L733 87.7 L718 86.7Z" fill="#a00000"/>
<path d="M718 85.8 L733 86.6 L748 87.4 L763 88.1 L778 88.6 L793 89.1 L808 89.5 L823 89.9 L838 90.2 L852 90.4 L867 90.6 L882 90.8 L897 90.9 L912 91.0 L927 91.1 L942 91.1 L957 91.1 L972 91.0 L987 90.9 L1002 90.8 L1017 90.6 L1032 90.3 L1047 90.0 L1062 89.6 L1076 89.1 L1091 88.6 L1106 88.0 L1121 87.2 L1136 86.4 L1151 85.5 L1166 84.5 L1181 83.4 L1196 82.2 L1196 83.5 L1181 85.0 L1166 86.4 L1151 87.6 L1136 88.7 L1121 89.7 L1106 90.6 L1091 91.4 L1076 92.0 L1062 92.6 L1047 93.1 L1032 93.5 L1017 93.8 L1002 94.1 L987 94.2 L972 94.4 L957 94.4 L942 94.4 L927 94.4 L912 94.3 L897 94.2 L882 94.1 L867 93.9 L852 93.6 L838 93.3 L823 92.9 L808 92.5 L793 92.0 L778 91.4 L763 90.7 L748 89.9 L733 89.0 L718 87.9Z" fill="#950000"/>
<path d="M718 87.0 L733 88.0 L748 88.8 L763 89.6 L778 90.2 L793 90.7 L808 91.2 L823 91.6 L838 91.9 L852 92.2 L867 92.4 L882 92.6 L897 92.8 L912 92.9 L927 93.0 L942 93.0 L957 93.0 L972 92.9 L987 92.8 L1002 92.6 L1017 92.4 L1032 92.1 L1047 91.7 L1062 91.3 L1076 90.8 L1091 90.2 L1106 89.5 L1121 88.7 L1136 87.7 L1151 86.7 L1166 85.6 L1181 84.3 L1196 83.0 L1196 84.3 L1181 86.0 L1166 87.5 L1151 88.8 L1136 90.0 L1121 91.1 L1106 92.1 L1091 93.0 L1076 93.7 L1062 94.3 L1047 94.8 L1032 95.3 L1017 95.6 L1002 95.9 L987 96.1 L972 96.2 L957 96.3 L942 96.3 L927 96.3 L912 96.2 L897 96.1 L882 95.9 L867 95.7 L852 95.4 L838 95.1 L823 94.7 L808 94.2 L793 93.6 L778 93.0 L763 92.2 L748 91.4 L733 90.3 L718 89.1Z" fill="#880000"/>
<path d="M718 88.2 L733 89.3 L748 90.3 L763 91.1 L778 91.8 L793 92.4 L808 92.9 L823 93.3 L838 93.7 L852 94.0 L867 94.3 L882 94.5 L897 94.7 L912 94.8 L927 94.9 L942 94.9 L957 94.9 L972 94.8 L987 94.7 L1002 94.5 L1017 94.2 L1032 93.9 L1047 93.5 L1062 93.0 L1076 92.4 L1091 91.7 L1106 91.0 L1121 90.1 L1136 89.0 L1151 87.9 L1166 86.6 L1181 85.2 L1196 83.7 L1196 85.1 L1181 86.9 L1166 88.5 L1151 90.0 L1136 91.3 L1121 92.5 L1106 93.6 L1091 94.5 L1076 95.3 L1062 96.0 L1047 96.6 L1032 97.1 L1017 97.5 L1002 97.8 L987 98.0 L972 98.1 L957 98.2 L942 98.2 L927 98.2 L912 98.1 L897 98.0 L882 97.8 L867 97.5 L852 97.2 L838 96.8 L823 96.4 L808 95.9 L793 95.3 L778 94.6 L763 93.7 L748 92.8 L733 91.7 L718 90.4Z" fill="#7d0000"/>
<path d="M718 89.4 L733 90.6 L748 91.7 L763 92.6 L778 93.4 L793 94.0 L808 94.6 L823 95.1 L838 95.5 L852 95.8 L867 96.1 L882 96.3 L897 96.5 L912 96.7 L927 96.7 L942 96.8 L957 96.8 L972 96.7 L987 96.5 L1002 96.3 L1017 96.1 L1032 95.7 L1047 95.2 L1062 94.7 L1076 94.1 L1091 93.3 L1106 92.5 L1121 91.5 L1136 90.3 L1151 89.1 L1166 87.7 L1181 86.2 L1196 84.5 L1196 85.9 L1181 87.8 L1166 89.6 L1151 91.2 L1136 92.7 L1121 93.9 L1106 95.1 L1091 96.1 L1076 97.0 L1062 97.7 L1047 98.3 L1032 98.9 L1017 99.3 L1002 99.6 L987 99.8 L972 100.0 L957 100.1 L942 100.1 L927 100.1 L912 100.0 L897 99.8 L882 99.6 L867 99.3 L852 99.0 L838 98.6 L823 98.1 L808 97.6 L793 96.9 L778 96.2 L763 95.3 L748 94.2 L733 93.0 L718 91.6Z" fill="#7a0000"/>
<path d="M718 90.6 L733 92.0 L748 93.1 L763 94.1 L778 94.9 L793 95.7 L808 96.3 L823 96.8 L838 97.2 L852 97.6 L867 97.9 L882 98.2 L897 98.4 L912 98.5 L927 98.6 L942 98.7 L957 98.6 L972 98.6 L987 98.4 L1002 98.2 L1017 97.9 L1032 97.5 L1047 97.0 L1062 96.4 L1076 95.7 L1091 94.9 L1106 93.9 L1121 92.9 L1136 91.7 L1151 90.3 L1166 88.8 L1181 87.1 L1196 85.3 L1196 86.6 L1181 88.7 L1166 90.7 L1151 92.4 L1136 94.0 L1121 95.4 L1106 96.6 L1091 97.7 L1076 98.6 L1062 99.4 L1047 100.1 L1032 100.7 L1017 101.1 L1002 101.5 L987 101.7 L972 101.9 L957 102.0 L942 102.0 L927 102.0 L912 101.9 L897 101.7 L882 101.5 L867 101.2 L852 100.8 L838 100.4 L823 99.9 L808 99.3 L793 98.6 L778 97.7 L763 96.8 L748 95.6 L733 94.3 L718 92.8Z" fill="#800000"/>
<path d="M718 91.9 L733 93.3 L748 94.5 L763 95.6 L778 96.5 L793 97.3 L808 98.0 L823 98.5 L838 99.0 L852 99.4 L867 99.8 L882 100.0 L897 100.3 L912 100.4 L927 100.5 L942 100.6 L957 100.5 L972 100.4 L987 100.3 L1002 100.0 L1017 99.7 L1032 99.3 L1047 98.7 L1062 98.1 L1076 97.4 L1091 96.5 L1106 95.4 L1121 94.3 L1136 93.0 L1151 91.5 L1166 89.8 L1181 88.0 L1196 86.0 L1196 87.4 L1181 89.7 L1166 91.7 L1151 93.6 L1136 95.3 L1121 96.8 L1106 98.1 L1091 99.2 L1076 100.3 L1062 101.1 L1047 101.8 L1032 102.4 L1017 102.9 L1002 103.3 L987 103.6 L972 103.8 L957 103.9 L942 103.9 L927 103.8 L912 103.7 L897 103.6 L882 103.3 L867 103.0 L852 102.6 L838 102.1 L823 101.6 L808 101.0 L793 100.2 L778 99.3 L763 98.3 L748 97.1 L733 95.7 L718 94.0Z" fill="#880000"/>
<path d="M718 93.1 L733 94.6 L748 96.0 L763 97.1 L778 98.1 L793 98.9 L808 99.7 L823 100.3 L838 100.8 L852 101.2 L867 101.6 L882 101.9 L897 102.1 L912 102.3 L927 102.4 L942 102.4 L957 102.4 L972 102.3 L987 102.1 L1002 101.9 L1017 101.5 L1032 101.1 L1047 100.5 L1062 99.8 L1076 99.0 L1091 98.0 L1106 96.9 L1121 95.7 L1136 94.3 L1151 92.7 L1166 90.9 L1181 88.9 L1196 86.8 L1196 88.2 L1181 90.6 L1166 92.8 L1151 94.8 L1136 96.6 L1121 98.2 L1106 99.6 L1091 100.8 L1076 101.9 L1062 102.8 L1047 103.6 L1032 104.2 L1017 104.7 L1002 105.1 L987 105.4 L972 105.6 L957 105.8 L942 105.8 L927 105.7 L912 105.6 L897 105.4 L882 105.2 L867 104.8 L852 104.4 L838 103.9 L823 103.3 L808 102.6 L793 101.8 L778 100.9 L763 99.8 L748 98.5 L733 97.0 L718 95.2Z" fill="#8b0000"/>
<path d="M718 94.3 L733 96.0 L748 97.4 L763 98.6 L778 99.7 L793 100.6 L808 101.3 L823 102.0 L838 102.6 L852 103.0 L867 103.4 L882 103.7 L897 104.0 L912 104.2 L927 104.3 L942 104.3 L957 104.3 L972 104.2 L987 104.0 L1002 103.7 L1017 103.3 L1032 102.9 L1047 102.2 L1062 101.5 L1076 100.6 L1091 99.6 L1106 98.4 L1121 97.1 L1136 95.6 L1151 93.9 L1166 92.0 L1181 89.9 L1196 87.6 L1196 88.9 L1181 91.5 L1166 93.8 L1151 96.0 L1136 97.9 L1121 99.6 L1106 101.1 L1091 102.4 L1076 103.5 L1062 104.5 L1047 105.3 L1032 106.0 L1017 106.6 L1002 107.0 L987 107.3 L972 107.5 L957 107.6 L942 107.7 L927 107.6 L912 107.5 L897 107.3 L882 107.0 L867 106.6 L852 106.2 L838 105.7 L823 105.1 L808 104.3 L793 103.5 L778 102.5 L763 101.3 L748 99.9 L733 98.3 L718 96.5Z" fill="#910000"/>
<path d="M718 95.5 L733 97.3 L748 98.8 L763 100.1 L778 101.3 L793 102.2 L808 103.0 L823 103.7 L838 104.3 L852 104.8 L867 105.2 L882 105.6 L897 105.8 L912 106.0 L927 106.2 L942 106.2 L957 106.2 L972 106.1 L987 105.9 L1002 105.6 L1017 105.2 L1032 104.6 L1047 104.0 L1062 103.2 L1076 102.3 L1091 101.2 L1106 99.9 L1121 98.5 L1136 96.9 L1151 95.1 L1166 93.0 L1181 90.8 L1196 88.4 L1196 89.7 L1181 92.4 L1166 94.9 L1151 97.2 L1136 99.2 L1121 101.0 L1106 102.6 L1091 104.0 L1076 105.2 L1062 106.2 L1047 107.1 L1032 107.8 L1017 108.4 L1002 108.8 L987 109.2 L972 109.4 L957 109.5 L942 109.6 L927 109.5 L912 109.4 L897 109.1 L882 108.9 L867 108.5 L852 108.0 L838 107.5 L823 106.8 L808 106.0 L793 105.1 L778 104.0 L763 102.8 L748 101.3 L733 99.7 L718 97.7Z" fill="#9b0000"/>
<path d="M718 96.7 L733 98.6 L748 100.3 L763 101.6 L778 102.8 L793 103.9 L808 104.7 L823 105.5 L838 106.1 L852 106.6 L867 107.1 L882 107.4 L897 107.7 L912 107.9 L927 108.1 L942 108.1 L957 108.1 L972 108.0 L987 107.7 L1002 107.4 L1017 107.0 L1032 106.4 L1047 105.7 L1062 104.9 L1076 103.9 L1091 102.8 L1106 101.4 L1121 99.9 L1136 98.2 L1151 96.2 L1166 94.1 L1181 91.7 L1196 89.1 L1196 90.5 L1181 93.4 L1166 96.0 L1151 98.3 L1136 100.5 L1121 102.4 L1106 104.1 L1091 105.5 L1076 106.8 L1062 107.9 L1047 108.8 L1032 109.6 L1017 110.2 L1002 110.7 L987 111.0 L972 111.3 L957 111.4 L942 111.4 L927 111.4 L912 111.2 L897 111.0 L882 110.7 L867 110.3 L852 109.8 L838 109.2 L823 108.5 L808 107.7 L793 106.7 L778 105.6 L763 104.3 L748 102.8 L733 101.0 L718 98.9Z" fill="#a60000"/>
<path d="M718 98.0 L733 100.0 L748 101.7 L763 103.1 L778 104.4 L793 105.5 L808 106.4 L823 107.2 L838 107.9 L852 108.4 L867 108.9 L882 109.3 L897 109.6 L912 109.8 L927 109.9 L942 110.0 L957 110.0 L972 109.8 L987 109.6 L1002 109.3 L1017 108.8 L1032 108.2 L1047 107.5 L1062 106.6 L1076 105.6 L1091 104.3 L1106 102.9 L1121 101.3 L1136 99.5 L1151 97.4 L1166 95.2 L1181 92.6 L1196 89.9 L1196 91.3 L1181 94.3 L1166 97.0 L1151 99.5 L1136 101.8 L1121 103.8 L1106 105.6 L1091 107.1 L1076 108.5 L1062 109.6 L1047 110.6 L1032 111.4 L1017 112.0 L1002 112.5 L987 112.9 L972 113.2 L957 113.3 L942 113.3 L927 113.3 L912 113.1 L897 112.9 L882 112.6 L867 112.1 L852 111.6 L838 111.0 L823 110.3 L808 109.4 L793 108.4 L778 107.2 L763 105.8 L748 104.2 L733 102.3 L718 100.1Z" fill="#ae0000"/>
<path d="M718 99.2 L733 101.3 L748 103.1 L763 104.7 L778 106.0 L793 107.1 L808 108.1 L823 108.9 L838 109.6 L852 110.2 L867 110.7 L882 111.1 L897 111.4 L912 111.7 L927 111.8 L942 111.9 L957 111.9 L972 111.7 L987 111.5 L1002 111.1 L1017 110.6 L1032 110.0 L1047 109.2 L1062 108.3 L1076 107.2 L1091 105.9 L1106 104.4 L1121 102.7 L1136 100.8 L1151 98.6 L1166 96.2 L1181 93.6 L1196 90.7 L1196 92.0 L1181 95.2 L1166 98.1 L1151 100.7 L1136 103.1 L1121 105.2 L1106 107.1 L1091 108.7 L1076 110.1 L1062 111.3 L1047 112.3 L1032 113.2 L1017 113.9 L1002 114.4 L987 114.8 L972 115.0 L957 115.2 L942 115.2 L927 115.2 L912 115.0 L897 114.7 L882 114.4 L867 114.0 L852 113.4 L838 112.8 L823 112.0 L808 111.1 L793 110.0 L778 108.8 L763 107.3 L748 105.6 L733 103.6 L718 101.3Z" fill="#b20000"/>
<path d="M718 100.4 L733 102.6 L748 104.5 L763 106.2 L778 107.6 L793 108.8 L808 109.8 L823 110.7 L838 111.4 L852 112.0 L867 112.6 L882 113.0 L897 113.3 L912 113.6 L927 113.7 L942 113.8 L957 113.7 L972 113.6 L987 113.3 L1002 113.0 L1017 112.5 L1032 111.8 L1047 111.0 L1062 110.0 L1076 108.9 L1091 107.5 L1106 105.9 L1121 104.1 L1136 102.1 L1151 99.8 L1166 97.3 L1181 94.5 L1196 91.4 L1196 92.8 L1181 96.1 L1166 99.2 L1151 101.9 L1136 104.4 L1121 106.6 L1106 108.6 L1091 110.3 L1076 111.8 L1062 113.0 L1047 114.1 L1032 115.0 L1017 115.7 L1002 116.2 L987 116.6 L972 116.9 L957 117.1 L942 117.1 L927 117.0 L912 116.9 L897 116.6 L882 116.2 L867 115.8 L852 115.2 L838 114.5 L823 113.7 L808 112.8 L793 111.7 L778 110.4 L763 108.8 L748 107.1 L733 105.0 L718 102.6Z" fill="#ac0000"/>
<path d="M718 101.6 L733 104.0 L748 106.0 L763 107.7 L778 109.1 L793 110.4 L808 111.5 L823 112.4 L838 113.2 L852 113.8 L867 114.4 L882 114.8 L897 115.2 L912 115.4 L927 115.6 L942 115.7 L957 115.6 L972 115.5 L987 115.2 L1002 114.8 L1017 114.3 L1032 113.6 L1047 112.7 L1062 111.7 L1076 110.5 L1091 109.1 L1106 107.4 L1121 105.5 L1136 103.4 L1151 101.0 L1166 98.4 L1181 95.4 L1196 92.2 L1196 93.6 L1181 97.1 L1166 100.2 L1151 103.1 L1136 105.7 L1121 108.0 L1106 110.1 L1091 111.8 L1076 113.4 L1062 114.7 L1047 115.8 L1032 116.8 L1017 117.5 L1002 118.1 L987 118.5 L972 118.8 L957 119.0 L942 119.0 L927 118.9 L912 118.8 L897 118.5 L882 118.1 L867 117.6 L852 117.0 L838 116.3 L823 115.5 L808 114.5 L793 113.3 L778 111.9 L763 110.3 L748 108.5 L733 106.3 L718 103.8Z" fill="#a50000"/>
<path d="M718 102.8 L733 105.3 L748 107.4 L763 109.2 L778 110.7 L793 112.0 L808 113.2 L823 114.1 L838 114.9 L852 115.6 L867 116.2 L882 116.7 L897 117.0 L912 117.3 L927 117.5 L942 117.5 L957 117.5 L972 117.4 L987 117.1 L1002 116.7 L1017 116.1 L1032 115.4 L1047 114.5 L1062 113.4 L1076 112.1 L1091 110.6 L1106 108.9 L1121 106.9 L1136 104.7 L1151 102.2 L1166 99.4 L1181 96.3 L1196 93.0 L1196 94.4 L1181 98.0 L1166 101.3 L1151 104.3 L1136 107.0 L1121 109.4 L1106 111.5 L1091 113.4 L1076 115.0 L1062 116.4 L1047 117.6 L1032 118.6 L1017 119.3 L1002 119.9 L987 120.4 L972 120.7 L957 120.8 L942 120.9 L927 120.8 L912 120.6 L897 120.3 L882 119.9 L867 119.4 L852 118.8 L838 118.1 L823 117.2 L808 116.2 L793 114.9 L778 113.5 L763 111.8 L748 109.9 L733 107.6 L718 105.0Z" fill="#aa0000"/>
<path d="M718 104.1 L733 106.6 L748 108.8 L763 110.7 L778 112.3 L793 113.7 L808 114.9 L823 115.9 L838 116.7 L852 117.4 L867 118.0 L882 118.5 L897 118.9 L912 119.2 L927 119.4 L942 119.4 L957 119.4 L972 119.2 L987 118.9 L1002 118.5 L1017 117.9 L1032 117.2 L1047 116.2 L1062 115.1 L1076 113.8 L1091 112.2 L1106 110.4 L1121 108.3 L1136 106.0 L1151 103.4 L1166 100.5 L1181 97.3 L1196 93.8 L1196 95.1 L1181 98.9 L1166 102.4 L1151 105.5 L1136 108.3 L1121 110.8 L1106 113.0 L1091 115.0 L1076 116.7 L1062 118.1 L1047 119.3 L1032 120.3 L1017 121.2 L1002 121.8 L987 122.2 L972 122.6 L957 122.7 L942 122.8 L927 122.7 L912 122.5 L897 122.2 L882 121.8 L867 121.3 L852 120.6 L838 119.8 L823 118.9 L808 117.8 L793 116.6 L778 115.1 L763 113.4 L748 111.3 L733 109.0 L718 106.2Z" fill="#b90000"/>
<path d="M718 105.3 L733 107.9 L748 110.2 L763 112.2 L778 113.9 L793 115.3 L808 116.5 L823 117.6 L838 118.5 L852 119.2 L867 119.9 L882 120.4 L897 120.8 L912 121.1 L927 121.3 L942 121.3 L957 121.3 L972 121.1 L987 120.8 L1002 120.4 L1017 119.8 L1032 119.0 L1047 118.0 L1062 116.8 L1076 115.4 L1091 113.8 L1106 111.9 L1121 109.7 L1136 107.3 L1151 104.6 L1166 101.5 L1181 98.2 L1196 94.5 L1196 95.9 L1181 99.8 L1166 103.4 L1151 106.7 L1136 109.6 L1121 112.2 L1106 114.5 L1091 116.6 L1076 118.3 L1062 119.8 L1047 121.1 L1032 122.1 L1017 123.0 L1002 123.6 L987 124.1 L972 124.4 L957 124.6 L942 124.7 L927 124.6 L912 124.4 L897 124.1 L882 123.6 L867 123.1 L852 122.4 L838 121.6 L823 120.7 L808 119.5 L793 118.2 L778 116.7 L763 114.9 L748 112.8 L733 110.3 L718 107.4Z" fill="#c10101"/>
<path d="M718 106.5 L733 109.3 L748 111.7 L763 113.7 L778 115.5 L793 117.0 L808 118.2 L823 119.3 L838 120.3 L852 121.0 L867 121.7 L882 122.2 L897 122.6 L912 122.9 L927 123.1 L942 123.2 L957 123.2 L972 123.0 L987 122.7 L1002 122.2 L1017 121.6 L1032 120.8 L1047 119.7 L1062 118.5 L1076 117.1 L1091 115.4 L1106 113.4 L1121 111.1 L1136 108.6 L1151 105.8 L1166 102.6 L1181 99.1 L1196 95.3 L1196 96.7 L1181 100.8 L1166 104.5 L1151 107.9 L1136 110.9 L1121 113.6 L1106 116.0 L1091 118.1 L1076 120.0 L1062 121.5 L1047 122.8 L1032 123.9 L1017 124.8 L1002 125.5 L987 126.0 L972 126.3 L957 126.5 L942 126.6 L927 126.5 L912 126.3 L897 125.9 L882 125.5 L867 124.9 L852 124.2 L838 123.4 L823 122.4 L808 121.2 L793 119.9 L778 118.2 L763 116.4 L748 114.2 L733 111.6 L718 108.7Z" fill="#d21414"/>
<path d="M718 107.7 L733 110.6 L748 113.1 L763 115.2 L778 117.0 L793 118.6 L808 119.9 L823 121.1 L838 122.0 L852 122.8 L867 123.5 L882 124.1 L897 124.5 L912 124.8 L927 125.0 L942 125.1 L957 125.1 L972 124.9 L987 124.5 L1002 124.1 L1017 123.4 L1032 122.6 L1047 121.5 L1062 120.2 L1076 118.7 L1091 116.9 L1106 114.9 L1121 112.6 L1136 109.9 L1151 107.0 L1166 103.7 L1181 100.0 L1196 96.1 L1196 97.4 L1181 101.7 L1166 105.6 L1151 109.1 L1136 112.2 L1121 115.0 L1106 117.5 L1091 119.7 L1076 121.6 L1062 123.2 L1047 124.6 L1032 125.7 L1017 126.6 L1002 127.3 L987 127.9 L972 128.2 L957 128.4 L942 128.4 L927 128.4 L912 128.1 L897 127.8 L882 127.3 L867 126.8 L852 126.0 L838 125.2 L823 124.1 L808 122.9 L793 121.5 L778 119.8 L763 117.9 L748 115.6 L733 113.0 L718 109.9Z" fill="#e32727"/>
<path d="M718 108.9 L733 111.9 L748 114.5 L763 116.7 L778 118.6 L793 120.2 L808 121.6 L823 122.8 L838 123.8 L852 124.6 L867 125.3 L882 125.9 L897 126.4 L912 126.7 L927 126.9 L942 127.0 L957 126.9 L972 126.8 L987 126.4 L1002 125.9 L1017 125.2 L1032 124.3 L1047 123.2 L1062 121.9 L1076 120.3 L1091 118.5 L1106 116.4 L1121 114.0 L1136 111.2 L1151 108.1 L1166 104.7 L1181 101.0 L1196 96.9 L1196 98.2 L1181 102.6 L1166 106.6 L1151 110.3 L1136 113.5 L1121 116.4 L1106 119.0 L1091 121.3 L1076 123.3 L1062 124.9 L1047 126.3 L1032 127.5 L1017 128.4 L1002 129.2 L987 129.7 L972 130.1 L957 130.3 L942 130.3 L927 130.2 L912 130.0 L897 129.7 L882 129.2 L867 128.6 L852 127.8 L838 126.9 L823 125.9 L808 124.6 L793 123.1 L778 121.4 L763 119.4 L748 117.0 L733 114.3 L718 111.1Z" fill="#db1e1e"/>
<path d="M718 110.2 L733 113.3 L748 115.9 L763 118.2 L778 120.2 L793 121.9 L808 123.3 L823 124.5 L838 125.6 L852 126.4 L867 127.2 L882 127.8 L897 128.2 L912 128.6 L927 128.8 L942 128.9 L957 128.8 L972 128.6 L987 128.3 L1002 127.8 L1017 127.0 L1032 126.1 L1047 125.0 L1062 123.6 L1076 122.0 L1091 120.1 L1106 117.9 L1121 115.4 L1136 112.5 L1151 109.3 L1166 105.8 L1181 101.9 L1196 97.6 L1196 99.0 L1181 103.5 L1166 107.7 L1151 111.4 L1136 114.8 L1121 117.8 L1106 120.5 L1091 122.9 L1076 124.9 L1062 126.6 L1047 128.1 L1032 129.3 L1017 130.3 L1002 131.0 L987 131.6 L972 132.0 L957 132.2 L942 132.2 L927 132.1 L912 131.9 L897 131.5 L882 131.0 L867 130.4 L852 129.6 L838 128.7 L823 127.6 L808 126.3 L793 124.8 L778 123.0 L763 120.9 L748 118.5 L733 115.6 L718 112.3Z" fill="#c60606"/>
<path d="M718 111.4 L733 114.6 L748 117.4 L763 119.7 L778 121.8 L793 123.5 L808 125.0 L823 126.3 L838 127.3 L852 128.2 L867 129.0 L882 129.6 L897 130.1 L912 130.5 L927 130.7 L942 130.8 L957 130.7 L972 130.5 L987 130.2 L1002 129.6 L1017 128.9 L1032 127.9 L1047 126.7 L1062 125.3 L1076 123.6 L1091 121.7 L1106 119.4 L1121 116.8 L1136 113.8 L1151 110.5 L1166 106.9 L1181 102.8 L1196 98.4 L1196 99.8 L1181 104.5 L1166 108.7 L1151 112.6 L1136 116.1 L1121 119.3 L1106 122.0 L1091 124.4 L1076 126.5 L1062 128.3 L1047 129.8 L1032 131.1 L1017 132.1 L1002 132.9 L987 133.5 L972 133.8 L957 134.1 L942 134.1 L927 134.0 L912 133.8 L897 133.4 L882 132.9 L867 132.2 L852 131.4 L838 130.5 L823 129.3 L808 128.0 L793 126.4 L778 124.6 L763 122.4 L748 119.9 L733 117.0 L718 113.5Z" fill="#be0000"/>
<path d="M718 112.6 L733 115.9 L748 118.8 L763 121.2 L778 123.4 L793 125.1 L808 126.7 L823 128.0 L838 129.1 L852 130.1 L867 130.8 L882 131.5 L897 132.0 L912 132.3 L927 132.6 L942 132.7 L957 132.6 L972 132.4 L987 132.0 L1002 131.5 L1017 130.7 L1032 129.7 L1047 128.5 L1062 127.0 L1076 125.3 L1091 123.2 L1106 120.9 L1121 118.2 L1136 115.1 L1151 111.7 L1166 107.9 L1181 103.7 L1196 99.2 L1196 100.5 L1181 105.4 L1166 109.8 L1151 113.8 L1136 117.4 L1121 120.7 L1106 123.5 L1091 126.0 L1076 128.2 L1062 130.0 L1047 131.6 L1032 132.9 L1017 133.9 L1002 134.7 L987 135.3 L972 135.7 L957 135.9 L942 136.0 L927 135.9 L912 135.7 L897 135.3 L882 134.7 L867 134.1 L852 133.2 L838 132.2 L823 131.1 L808 129.7 L793 128.0 L778 126.1 L763 123.9 L748 121.3 L733 118.3 L718 114.8Z" fill="#ac0000"/>
<path d="M718 113.8 L733 117.3 L748 120.2 L763 122.8 L778 124.9 L793 126.8 L808 128.4 L823 129.7 L838 130.9 L852 131.9 L867 132.7 L882 133.3 L897 133.8 L912 134.2 L927 134.5 L942 134.5 L957 134.5 L972 134.3 L987 133.9 L1002 133.3 L1017 132.5 L1032 131.5 L1047 130.2 L1062 128.7 L1076 126.9 L1091 124.8 L1106 122.4 L1121 119.6 L1136 116.4 L1151 112.9 L1166 109.0 L1181 104.7 L1196 99.9 L1196 101.3 L1181 106.3 L1166 110.9 L1151 115.0 L1136 118.7 L1121 122.1 L1106 125.0 L1091 127.6 L1076 129.8 L1062 131.7 L1047 133.3 L1032 134.7 L1017 135.7 L1002 136.6 L987 137.2 L972 137.6 L957 137.8 L942 137.9 L927 137.8 L912 137.5 L897 137.1 L882 136.6 L867 135.9 L852 135.0 L838 134.0 L823 132.8 L808 131.4 L793 129.7 L778 127.7 L763 125.4 L748 122.7 L733 119.6 L718 116.0Z" fill="#990000"/>
<path d="M718 115.0 L733 118.6 L748 121.6 L763 124.3 L778 126.5 L793 128.4 L808 130.1 L823 131.5 L838 132.7 L852 133.7 L867 134.5 L882 135.2 L897 135.7 L912 136.1 L927 136.3 L942 136.4 L957 136.4 L972 136.2 L987 135.8 L1002 135.2 L1017 134.3 L1032 133.3 L1047 132.0 L1062 130.4 L1076 128.6 L1091 126.4 L1106 123.9 L1121 121.0 L1136 117.7 L1151 114.1 L1166 110.1 L1181 105.6 L1196 100.7 L1196 102.1 L1181 107.2 L1166 111.9 L1151 116.2 L1136 120.0 L1121 123.5 L1106 126.5 L1091 129.2 L1076 131.5 L1062 133.4 L1047 135.1 L1032 136.5 L1017 137.6 L1002 138.4 L987 139.1 L972 139.5 L957 139.7 L942 139.8 L927 139.7 L912 139.4 L897 139.0 L882 138.4 L867 137.7 L852 136.8 L838 135.8 L823 134.5 L808 133.1 L793 131.3 L778 129.3 L763 126.9 L748 124.2 L733 120.9 L718 117.2Z" fill="#910000"/>
<path d="M718 116.3 L733 119.9 L748 123.1 L763 125.8 L778 128.1 L793 130.1 L808 131.8 L823 133.2 L838 134.4 L852 135.5 L867 136.3 L882 137.0 L897 137.6 L912 138.0 L927 138.2 L942 138.3 L957 138.3 L972 138.0 L987 137.6 L1002 137.0 L1017 136.2 L1032 135.1 L1047 133.7 L1062 132.1 L1076 130.2 L1091 128.0 L1106 125.4 L1121 122.4 L1136 119.0 L1151 115.3 L1166 111.1 L1181 106.5 L1196 101.5 L1196 102.9 L1181 108.2 L1166 113.0 L1151 117.4 L1136 121.3 L1121 124.9 L1106 128.0 L1091 130.7 L1076 133.1 L1062 135.1 L1047 136.8 L1032 138.3 L1017 139.4 L1002 140.3 L987 140.9 L972 141.4 L957 141.6 L942 141.7 L927 141.6 L912 141.3 L897 140.9 L882 140.3 L867 139.5 L852 138.6 L838 137.6 L823 136.3 L808 134.7 L793 133.0 L778 130.9 L763 128.4 L748 125.6 L733 122.3 L718 118.4Z" fill="#770000"/>
<path d="M718 117.5 L733 121.3 L748 124.5 L763 127.3 L778 129.7 L793 131.7 L808 133.4 L823 134.9 L838 136.2 L852 137.3 L867 138.1 L882 138.9 L897 139.4 L912 139.8 L927 140.1 L942 140.2 L957 140.2 L972 139.9 L987 139.5 L1002 138.9 L1017 138.0 L1032 136.9 L1047 135.5 L1062 133.8 L1076 131.8 L1091 129.5 L1106 126.9 L1121 123.8 L1136 120.3 L1151 116.5 L1166 112.2 L1181 107.4 L1196 102.3 L1196 103.6 L1181 109.1 L1166 114.1 L1151 118.6 L1136 122.7 L1121 126.3 L1106 129.5 L1091 132.3 L1076 134.8 L1062 136.8 L1047 138.6 L1032 140.0 L1017 141.2 L1002 142.1 L987 142.8 L972 143.2 L957 143.5 L942 143.6 L927 143.4 L912 143.2 L897 142.7 L882 142.1 L867 141.4 L852 140.4 L838 139.3 L823 138.0 L808 136.4 L793 134.6 L778 132.5 L763 129.9 L748 127.0 L733 123.6 L718 119.6Z" fill="#6d0000"/>
<path d="M718 118.7 L733 122.6 L748 125.9 L763 128.8 L778 131.2 L793 133.3 L808 135.1 L823 136.7 L838 138.0 L852 139.1 L867 140.0 L882 140.7 L897 141.3 L912 141.7 L927 142.0 L942 142.1 L957 142.0 L972 141.8 L987 141.4 L1002 140.7 L1017 139.8 L1032 138.7 L1047 137.2 L1062 135.5 L1076 133.5 L1091 131.1 L1106 128.3 L1121 125.2 L1136 121.7 L1151 117.7 L1166 113.3 L1181 108.4 L1196 103.0 L1196 104.4 L1181 110.0 L1166 115.1 L1151 119.8 L1136 124.0 L1121 127.7 L1106 131.0 L1091 133.9 L1076 136.4 L1062 138.5 L1047 140.3 L1032 141.8 L1017 143.0 L1002 144.0 L987 144.7 L972 145.1 L957 145.4 L942 145.4 L927 145.3 L912 145.0 L897 144.6 L882 144.0 L867 143.2 L852 142.2 L838 141.1 L823 139.7 L808 138.1 L793 136.2 L778 134.0 L763 131.5 L748 128.4 L733 124.9 L718 120.9Z" fill="#7e0000"/>
<path d="M718 119.9 L733 123.9 L748 127.4 L763 130.3 L778 132.8 L793 135.0 L808 136.8 L823 138.4 L838 139.7 L852 140.9 L867 141.8 L882 142.6 L897 143.2 L912 143.6 L927 143.9 L942 144.0 L957 143.9 L972 143.7 L987 143.2 L1002 142.5 L1017 141.6 L1032 140.5 L1047 139.0 L1062 137.2 L1076 135.1 L1091 132.7 L1106 129.8 L1121 126.6 L1136 123.0 L1151 118.9 L1166 114.3 L1181 109.3 L1196 103.8 L1196 105.2 L1181 110.9 L1166 116.2 L1151 121.0 L1136 125.3 L1121 129.1 L1106 132.5 L1091 135.5 L1076 138.0 L1062 140.2 L1047 142.1 L1032 143.6 L1017 144.9 L1002 145.8 L987 146.5 L972 147.0 L957 147.3 L942 147.3 L927 147.2 L912 146.9 L897 146.5 L882 145.8 L867 145.0 L852 144.0 L838 142.9 L823 141.5 L808 139.8 L793 137.9 L778 135.6 L763 133.0 L748 129.9 L733 126.3 L718 122.1Z" fill="#8a0000"/>
<path d="M718 121.1 L733 125.3 L748 128.8 L763 131.8 L778 134.4 L793 136.6 L808 138.5 L823 140.1 L838 141.5 L852 142.7 L867 143.6 L882 144.4 L897 145.0 L912 145.5 L927 145.8 L942 145.9 L957 145.8 L972 145.6 L987 145.1 L1002 144.4 L1017 143.5 L1032 142.2 L1047 140.7 L1062 138.9 L1076 136.8 L1091 134.3 L1106 131.3 L1121 128.0 L1136 124.3 L1151 120.1 L1166 115.4 L1181 110.2 L1196 104.6 L1196 105.9 L1181 111.9 L1166 117.3 L1151 122.2 L1136 126.6 L1121 130.5 L1106 134.0 L1091 137.0 L1076 139.7 L1062 141.9 L1047 143.8 L1032 145.4 L1017 146.7 L1002 147.7 L987 148.4 L972 148.9 L957 149.1 L942 149.2 L927 149.1 L912 148.8 L897 148.3 L882 147.7 L867 146.9 L852 145.8 L838 144.6 L823 143.2 L808 141.5 L793 139.5 L778 137.2 L763 134.5 L748 131.3 L733 127.6 L718 123.3Z" fill="#990000"/>
<path d="M718 122.4 L733 126.6 L748 130.2 L763 133.3 L778 136.0 L793 138.3 L808 140.2 L823 141.9 L838 143.3 L852 144.5 L867 145.5 L882 146.3 L897 146.9 L912 147.4 L927 147.6 L942 147.8 L957 147.7 L972 147.4 L987 147.0 L1002 146.2 L1017 145.3 L1032 144.0 L1047 142.5 L1062 140.6 L1076 138.4 L1091 135.8 L1106 132.8 L1121 129.4 L1136 125.6 L1151 121.2 L1166 116.4 L1181 111.1 L1196 105.3 L1196 106.7 L1181 112.8 L1166 118.3 L1151 123.3 L1136 127.9 L1121 131.9 L1106 135.5 L1091 138.6 L1076 141.3 L1062 143.6 L1047 145.6 L1032 147.2 L1017 148.5 L1002 149.5 L987 150.3 L972 150.8 L957 151.0 L942 151.1 L927 151.0 L912 150.7 L897 150.2 L882 149.5 L867 148.7 L852 147.6 L838 146.4 L823 144.9 L808 143.2 L793 141.2 L778 138.8 L763 136.0 L748 132.7 L733 128.9 L718 124.5Z" fill="#af0000"/>
<path d="M718 123.6 L733 127.9 L748 131.6 L763 134.8 L778 137.6 L793 139.9 L808 141.9 L823 143.6 L838 145.0 L852 146.3 L867 147.3 L882 148.1 L897 148.8 L912 149.2 L927 149.5 L942 149.7 L957 149.6 L972 149.3 L987 148.8 L1002 148.1 L1017 147.1 L1032 145.8 L1047 144.2 L1062 142.3 L1076 140.1 L1091 137.4 L1106 134.3 L1121 130.8 L1136 126.9 L1151 122.4 L1166 117.5 L1181 112.1 L1196 106.1 L1196 107.5 L1181 113.7 L1166 119.4 L1151 124.5 L1136 129.2 L1121 133.3 L1106 137.0 L1091 140.2 L1076 143.0 L1062 145.3 L1047 147.3 L1032 149.0 L1017 150.3 L1002 151.4 L987 152.1 L972 152.6 L957 152.9 L942 153.0 L927 152.9 L912 152.6 L897 152.1 L882 151.4 L867 150.5 L852 149.5 L838 148.2 L823 146.7 L808 144.9 L793 142.8 L778 140.3 L763 137.5 L748 134.2 L733 130.3 L718 125.7Z" fill="#b70202"/>
<path d="M718 124.8 L733 129.2 L748 133.1 L763 136.3 L778 139.1 L793 141.5 L808 143.6 L823 145.3 L838 146.8 L852 148.1 L867 149.1 L882 150.0 L897 150.6 L912 151.1 L927 151.4 L942 151.5 L957 151.5 L972 151.2 L987 150.7 L1002 149.9 L1017 148.9 L1032 147.6 L1047 146.0 L1062 144.0 L1076 141.7 L1091 139.0 L1106 135.8 L1121 132.2 L1136 128.2 L1151 123.6 L1166 118.6 L1181 113.0 L1196 106.9 L1196 108.3 L1181 114.6 L1166 120.5 L1151 125.7 L1136 130.5 L1121 134.7 L1106 138.5 L1091 141.8 L1076 144.6 L1062 147.0 L1047 149.1 L1032 150.8 L1017 152.2 L1002 153.2 L987 154.0 L972 154.5 L957 154.8 L942 154.9 L927 154.8 L912 154.4 L897 153.9 L882 153.2 L867 152.3 L852 151.3 L838 149.9 L823 148.4 L808 146.6 L793 144.4 L778 141.9 L763 139.0 L748 135.6 L733 131.6 L718 127.0Z" fill="#c80d0d"/>
<path d="M718 126.0 L733 130.6 L748 134.5 L763 137.8 L778 140.7 L793 143.2 L808 145.3 L823 147.1 L838 148.6 L852 149.9 L867 150.9 L882 151.8 L897 152.5 L912 153.0 L927 153.3 L942 153.4 L957 153.4 L972 153.1 L987 152.6 L1002 151.8 L1017 150.8 L1032 149.4 L1047 147.7 L1062 145.7 L1076 143.3 L1091 140.5 L1106 137.3 L1121 133.6 L1136 129.5 L1151 124.8 L1166 119.6 L1181 113.9 L1196 107.7 L1196 109.0 L1181 115.6 L1166 121.5 L1151 126.9 L1136 131.8 L1121 136.1 L1106 140.0 L1091 143.3 L1076 146.2 L1062 148.7 L1047 150.8 L1032 152.6 L1017 154.0 L1002 155.1 L987 155.9 L972 156.4 L957 156.7 L942 156.8 L927 156.6 L912 156.3 L897 155.8 L882 155.1 L867 154.2 L852 153.1 L838 151.7 L823 150.1 L808 148.3 L793 146.1 L778 143.5 L763 140.5 L748 137.0 L733 132.9 L718 128.2Z" fill="#d81717"/>
<path d="M718 127.2 L733 131.9 L748 135.9 L763 139.3 L778 142.3 L793 144.8 L808 147.0 L823 148.8 L838 150.4 L852 151.7 L867 152.8 L882 153.7 L897 154.4 L912 154.9 L927 155.2 L942 155.3 L957 155.2 L972 155.0 L987 154.4 L1002 153.6 L1017 152.6 L1032 151.2 L1047 149.5 L1062 147.4 L1076 145.0 L1091 142.1 L1106 138.8 L1121 135.0 L1136 130.8 L1151 126.0 L1166 120.7 L1181 114.8 L1196 108.4 L1196 109.8 L1181 116.5 L1166 122.6 L1151 128.1 L1136 133.1 L1121 137.5 L1106 141.5 L1091 144.9 L1076 147.9 L1062 150.4 L1047 152.6 L1032 154.4 L1017 155.8 L1002 156.9 L987 157.7 L972 158.3 L957 158.6 L942 158.7 L927 158.5 L912 158.2 L897 157.7 L882 156.9 L867 156.0 L852 154.9 L838 153.5 L823 151.9 L808 149.9 L793 147.7 L778 145.1 L763 142.0 L748 138.4 L733 134.3 L718 129.4Z" fill="#d51313"/>
<path d="M718 128.5 L733 133.2 L748 137.3 L763 140.9 L778 143.9 L793 146.4 L808 148.7 L823 150.5 L838 152.1 L852 153.5 L867 154.6 L882 155.5 L897 156.2 L912 156.7 L927 157.1 L942 157.2 L957 157.1 L972 156.8 L987 156.3 L1002 155.5 L1017 154.4 L1032 153.0 L1047 151.2 L1062 149.1 L1076 146.6 L1091 143.7 L1106 140.3 L1121 136.5 L1136 132.1 L1151 127.2 L1166 121.8 L1181 115.8 L1196 109.2 L1196 110.6 L1181 117.4 L1166 123.6 L1151 129.3 L1136 134.4 L1121 138.9 L1106 143.0 L1091 146.5 L1076 149.5 L1062 152.1 L1047 154.3 L1032 156.2 L1017 157.6 L1002 158.8 L987 159.6 L972 160.2 L957 160.5 L942 160.5 L927 160.4 L912 160.1 L897 159.5 L882 158.8 L867 157.8 L852 156.7 L838 155.3 L823 153.6 L808 151.6 L793 149.3 L778 146.7 L763 143.5 L748 139.9 L733 135.6 L718 130.6Z" fill="#c70505"/>
<path d="M718 129.7 L733 134.6 L748 138.8 L763 142.4 L778 145.4 L793 148.1 L808 150.3 L823 152.3 L838 153.9 L852 155.3 L867 156.4 L882 157.4 L897 158.1 L912 158.6 L927 159.0 L942 159.1 L957 159.0 L972 158.7 L987 158.2 L1002 157.3 L1017 156.2 L1032 154.8 L1047 153.0 L1062 150.8 L1076 148.3 L1091 145.3 L1106 141.8 L1121 137.9 L1136 133.4 L1151 128.4 L1166 122.8 L1181 116.7 L1196 110.0 L1196 111.3 L1181 118.3 L1166 124.7 L1151 130.5 L1136 135.7 L1121 140.3 L1106 144.5 L1091 148.1 L1076 151.2 L1062 153.8 L1047 156.1 L1032 157.9 L1017 159.4 L1002 160.6 L987 161.5 L972 162.0 L957 162.4 L942 162.4 L927 162.3 L912 161.9 L897 161.4 L882 160.6 L867 159.7 L852 158.5 L838 157.0 L823 155.3 L808 153.3 L793 151.0 L778 148.2 L763 145.0 L748 141.3 L733 136.9 L718 131.8Z" fill="#c20000"/>
<path d="M718 130.9 L733 135.9 L748 140.2 L763 143.9 L778 147.0 L793 149.7 L808 152.0 L823 154.0 L838 155.7 L852 157.1 L867 158.2 L882 159.2 L897 160.0 L912 160.5 L927 160.8 L942 161.0 L957 160.9 L972 160.6 L987 160.0 L1002 159.2 L1017 158.0 L1032 156.6 L1047 154.7 L1062 152.5 L1076 149.9 L1091 146.8 L1106 143.3 L1121 139.3 L1136 134.7 L1151 129.6 L1166 123.9 L1181 117.6 L1196 110.8 L1196 112.1 L1181 119.3 L1166 125.8 L1151 131.7 L1136 137.0 L1121 141.7 L1106 145.9 L1091 149.6 L1076 152.8 L1062 155.5 L1047 157.8 L1032 159.7 L1017 161.3 L1002 162.5 L987 163.3 L972 163.9 L957 164.2 L942 164.3 L927 164.2 L912 163.8 L897 163.3 L882 162.5 L867 161.5 L852 160.3 L838 158.8 L823 157.1 L808 155.0 L793 152.6 L778 149.8 L763 146.5 L748 142.7 L733 138.3 L718 133.1Z" fill="#c30000"/>
<path d="M718 132.1 L733 137.2 L748 141.6 L763 145.4 L778 148.6 L793 151.4 L808 153.7 L823 155.7 L838 157.4 L852 158.9 L867 160.1 L882 161.1 L897 161.8 L912 162.4 L927 162.7 L942 162.9 L957 162.8 L972 162.5 L987 161.9 L1002 161.0 L1017 159.9 L1032 158.4 L1047 156.5 L1062 154.2 L1076 151.6 L1091 148.4 L1106 144.8 L1121 140.7 L1136 136.0 L1151 130.8 L1166 125.0 L1181 118.5 L1196 111.5 L1196 112.9 L1181 120.2 L1166 126.8 L1151 132.9 L1136 138.3 L1121 143.2 L1106 147.4 L1091 151.2 L1076 154.5 L1062 157.2 L1047 159.6 L1032 161.5 L1017 163.1 L1002 164.3 L987 165.2 L972 165.8 L957 166.1 L942 166.2 L927 166.1 L912 165.7 L897 165.1 L882 164.3 L867 163.3 L852 162.1 L838 160.6 L823 158.8 L808 156.7 L793 154.3 L778 151.4 L763 148.0 L748 144.1 L733 139.6 L718 134.3Z" fill="#c40000"/>
<path d="M718 133.3 L733 138.6 L748 143.0 L763 146.9 L778 150.2 L793 153.0 L808 155.4 L823 157.5 L838 159.2 L852 160.7 L867 161.9 L882 162.9 L897 163.7 L912 164.3 L927 164.6 L942 164.8 L957 164.7 L972 164.4 L987 163.8 L1002 162.9 L1017 161.7 L1032 160.2 L1047 158.2 L1062 155.9 L1076 153.2 L1091 150.0 L1106 146.3 L1121 142.1 L1136 137.3 L1151 132.0 L1166 126.0 L1181 119.5 L1196 112.3 L1196 113.7 L1181 121.1 L1166 127.9 L1151 134.1 L1136 139.6 L1121 144.6 L1106 148.9 L1091 152.8 L1076 156.1 L1062 158.9 L1047 161.3 L1032 163.3 L1017 164.9 L1002 166.2 L987 167.1 L972 167.7 L957 168.0 L942 168.1 L927 168.0 L912 167.6 L897 167.0 L882 166.2 L867 165.1 L852 163.9 L838 162.3 L823 160.5 L808 158.4 L793 155.9 L778 153.0 L763 149.6 L748 145.6 L733 140.9 L718 135.5Z" fill="#c50101"/>
<path d="M718 134.6 L733 139.9 L748 144.5 L763 148.4 L778 151.8 L793 154.6 L808 157.1 L823 159.2 L838 161.0 L852 162.5 L867 163.7 L882 164.8 L897 165.5 L912 166.1 L927 166.5 L942 166.7 L957 166.6 L972 166.2 L987 165.6 L1002 164.7 L1017 163.5 L1032 161.9 L1047 160.0 L1062 157.6 L1076 154.8 L1091 151.6 L1106 147.8 L1121 143.5 L1136 138.6 L1151 133.2 L1166 127.1 L1181 120.4 L1196 113.1 L1196 114.4 L1181 122.0 L1166 129.0 L1151 135.3 L1136 140.9 L1121 146.0 L1106 150.4 L1091 154.4 L1076 157.7 L1062 160.6 L1047 163.1 L1032 165.1 L1017 166.7 L1002 168.0 L987 168.9 L972 169.6 L957 169.9 L942 170.0 L927 169.8 L912 169.5 L897 168.8 L882 168.0 L867 167.0 L852 165.7 L838 164.1 L823 162.3 L808 160.1 L793 157.5 L778 154.6 L763 151.1 L748 147.0 L733 142.2 L718 136.7Z" fill="#ca0606"/>
<path d="M718 135.8 L733 141.2 L748 145.9 L763 149.9 L778 153.3 L793 156.3 L808 158.8 L823 160.9 L838 162.7 L852 164.3 L867 165.6 L882 166.6 L897 167.4 L912 168.0 L927 168.4 L942 168.5 L957 168.5 L972 168.1 L987 167.5 L1002 166.6 L1017 165.3 L1032 163.7 L1047 161.7 L1062 159.3 L1076 156.5 L1091 153.1 L1106 149.3 L1121 144.9 L1136 139.9 L1151 134.3 L1166 128.2 L1181 121.3 L1196 113.8 L1196 115.2 L1181 123.0 L1166 130.0 L1151 136.4 L1136 142.2 L1121 147.4 L1106 151.9 L1091 155.9 L1076 159.4 L1062 162.3 L1047 164.8 L1032 166.9 L1017 168.6 L1002 169.8 L987 170.8 L972 171.4 L957 171.8 L942 171.9 L927 171.7 L912 171.3 L897 170.7 L882 169.9 L867 168.8 L852 167.5 L838 165.9 L823 164.0 L808 161.8 L793 159.2 L778 156.1 L763 152.6 L748 148.4 L733 143.6 L718 137.9Z" fill="#ce0a0a"/>
<path d="M718 137.0 L733 142.6 L748 147.3 L763 151.4 L778 154.9 L793 157.9 L808 160.5 L823 162.7 L838 164.5 L852 166.1 L867 167.4 L882 168.4 L897 169.3 L912 169.9 L927 170.3 L942 170.4 L957 170.3 L972 170.0 L987 169.4 L1002 168.4 L1017 167.2 L1032 165.5 L1047 163.5 L1062 161.0 L1076 158.1 L1091 154.7 L1106 150.8 L1121 146.3 L1136 141.2 L1151 135.5 L1166 129.2 L1181 122.2 L1196 114.6 L1196 116.0 L1181 123.9 L1166 131.1 L1151 137.6 L1136 143.5 L1121 148.8 L1106 153.4 L1091 157.5 L1076 161.0 L1062 164.1 L1047 166.6 L1032 168.7 L1017 170.4 L1002 171.7 L987 172.7 L972 173.3 L957 173.7 L942 173.8 L927 173.6 L912 173.2 L897 172.6 L882 171.7 L867 170.6 L852 169.3 L838 167.6 L823 165.7 L808 163.5 L793 160.8 L778 157.7 L763 154.1 L748 149.8 L733 144.9 L718 139.2Z" fill="#c20606"/>
<path d="M718 138.2 L733 143.9 L748 148.8 L763 152.9 L778 156.5 L793 159.6 L808 162.2 L823 164.4 L838 166.3 L852 167.9 L867 169.2 L882 170.3 L897 171.1 L912 171.8 L927 172.2 L942 172.3 L957 172.2 L972 171.9 L987 171.2 L1002 170.3 L1017 169.0 L1032 167.3 L1047 165.2 L1062 162.7 L1076 159.8 L1091 156.3 L1106 152.3 L1121 147.7 L1136 142.5 L1151 136.7 L1166 130.3 L1181 123.2 L1196 115.4 L1196 116.8 L1181 124.8 L1166 132.2 L1151 138.8 L1136 144.8 L1121 150.2 L1106 154.9 L1091 159.1 L1076 162.7 L1062 165.8 L1047 168.3 L1032 170.5 L1017 172.2 L1002 173.5 L987 174.5 L972 175.2 L957 175.6 L942 175.7 L927 175.5 L912 175.1 L897 174.4 L882 173.6 L867 172.4 L852 171.1 L838 169.4 L823 167.5 L808 165.2 L793 162.5 L778 159.3 L763 155.6 L748 151.3 L733 146.2 L718 140.4Z" fill="#ae0101"/>
<path d="M718 139.4 L733 145.2 L748 150.2 L763 154.4 L778 158.1 L793 161.2 L808 163.9 L823 166.1 L838 168.1 L852 169.7 L867 171.0 L882 172.1 L897 173.0 L912 173.6 L927 174.0 L942 174.2 L957 174.1 L972 173.8 L987 173.1 L1002 172.1 L1017 170.8 L1032 169.1 L1047 167.0 L1062 164.4 L1076 161.4 L1091 157.9 L1106 153.8 L1121 149.1 L1136 143.8 L1151 137.9 L1166 131.3 L1181 124.1 L1196 116.2 L1196 117.5 L1181 125.7 L1166 133.2 L1151 140.0 L1136 146.1 L1121 151.6 L1106 156.4 L1091 160.6 L1076 164.3 L1062 167.5 L1047 170.1 L1032 172.3 L1017 174.0 L1002 175.4 L987 176.4 L972 177.1 L957 177.5 L942 177.5 L927 177.4 L912 177.0 L897 176.3 L882 175.4 L867 174.3 L852 172.9 L838 171.2 L823 169.2 L808 166.8 L793 164.1 L778 160.9 L763 157.1 L748 152.7 L733 147.6 L718 141.6Z" fill="#a50000"/>
<path d="M718 140.7 L733 146.5 L748 151.6 L763 155.9 L778 159.7 L793 162.8 L808 165.5 L823 167.9 L838 169.8 L852 171.5 L867 172.9 L882 174.0 L897 174.9 L912 175.5 L927 175.9 L942 176.1 L957 176.0 L972 175.6 L987 175.0 L1002 174.0 L1017 172.6 L1032 170.9 L1047 168.7 L1062 166.1 L1076 163.1 L1091 159.4 L1106 155.3 L1121 150.5 L1136 145.1 L1151 139.1 L1166 132.4 L1181 125.0 L1196 116.9 L1196 118.3 L1181 126.7 L1166 134.3 L1151 141.2 L1136 147.4 L1121 153.0 L1106 157.9 L1091 162.2 L1076 166.0 L1062 169.2 L1047 171.8 L1032 174.1 L1017 175.9 L1002 177.2 L987 178.3 L972 179.0 L957 179.3 L942 179.4 L927 179.3 L912 178.8 L897 178.2 L882 177.3 L867 176.1 L852 174.7 L838 173.0 L823 170.9 L808 168.5 L793 165.7 L778 162.4 L763 158.6 L748 154.1 L733 148.9 L718 142.8Z" fill="#8c0000"/>
<path d="M718 141.9 L733 147.9 L748 153.0 L763 157.4 L778 161.2 L793 164.5 L808 167.2 L823 169.6 L838 171.6 L852 173.3 L867 174.7 L882 175.8 L897 176.7 L912 177.4 L927 177.8 L942 178.0 L957 177.9 L972 177.5 L987 176.8 L1002 175.8 L1017 174.5 L1032 172.7 L1047 170.5 L1062 167.8 L1076 164.7 L1091 161.0 L1106 156.8 L1121 151.9 L1136 146.4 L1151 140.3 L1166 133.5 L1181 125.9 L1196 117.7 L1196 119.1 L1181 127.6 L1166 135.4 L1151 142.4 L1136 148.7 L1121 154.4 L1106 159.4 L1091 163.8 L1076 167.6 L1062 170.9 L1047 173.6 L1032 175.9 L1017 177.7 L1002 179.1 L987 180.1 L972 180.8 L957 181.2 L942 181.3 L927 181.2 L912 180.7 L897 180.0 L882 179.1 L867 177.9 L852 176.5 L838 174.7 L823 172.7 L808 170.2 L793 167.4 L778 164.0 L763 160.1 L748 155.6 L733 150.2 L718 144.0Z" fill="#790000"/>
<path d="M718 143.1 L733 149.2 L748 154.5 L763 159.0 L778 162.8 L793 166.1 L808 168.9 L823 171.3 L838 173.4 L852 175.1 L867 176.5 L882 177.7 L897 178.6 L912 179.3 L927 179.7 L942 179.9 L957 179.8 L972 179.4 L987 178.7 L1002 177.7 L1017 176.3 L1032 174.5 L1047 172.2 L1062 169.5 L1076 166.3 L1091 162.6 L1106 158.3 L1121 153.3 L1136 147.7 L1151 141.5 L1166 134.5 L1181 126.9 L1196 118.5 L1196 119.8 L1181 128.5 L1166 136.4 L1151 143.6 L1136 150.0 L1121 155.8 L1106 160.9 L1091 165.4 L1076 169.2 L1062 172.6 L1047 175.3 L1032 177.6 L1017 179.5 L1002 180.9 L987 182.0 L972 182.7 L957 183.1 L942 183.2 L927 183.0 L912 182.6 L897 181.9 L882 181.0 L867 179.8 L852 178.3 L838 176.5 L823 174.4 L808 171.9 L793 169.0 L778 165.6 L763 161.6 L748 157.0 L733 151.6 L718 145.3Z" fill="#790000"/>
<path d="M718 144.3 L733 150.5 L748 155.9 L763 160.5 L778 164.4 L793 167.7 L808 170.6 L823 173.1 L838 175.1 L852 176.9 L867 178.4 L882 179.5 L897 180.5 L912 181.2 L927 181.6 L942 181.8 L957 181.7 L972 181.3 L987 180.6 L1002 179.5 L1017 178.1 L1032 176.3 L1047 174.0 L1062 171.2 L1076 168.0 L1091 164.2 L1106 159.8 L1121 154.7 L1136 149.0 L1151 142.7 L1166 135.6 L1181 127.8 L1196 119.2 L1196 120.6 L1181 129.4 L1166 137.5 L1151 144.8 L1136 151.3 L1121 157.2 L1106 162.4 L1091 166.9 L1076 170.9 L1062 174.3 L1047 177.1 L1032 179.4 L1017 181.3 L1002 182.8 L987 183.9 L972 184.6 L957 185.0 L942 185.1 L927 184.9 L912 184.5 L897 183.8 L882 182.8 L867 181.6 L852 180.1 L838 178.3 L823 176.1 L808 173.6 L793 170.6 L778 167.2 L763 163.1 L748 158.4 L733 152.9 L718 146.5Z" fill="#7a0000"/>
<path d="M718 145.5 L733 151.9 L748 157.3 L763 162.0 L778 166.0 L793 169.4 L808 172.3 L823 174.8 L838 176.9 L852 178.7 L867 180.2 L882 181.4 L897 182.3 L912 183.0 L927 183.5 L942 183.7 L957 183.6 L972 183.2 L987 182.4 L1002 181.4 L1017 179.9 L1032 178.1 L1047 175.7 L1062 172.9 L1076 169.6 L1091 165.7 L1106 161.3 L1121 156.1 L1136 150.3 L1151 143.9 L1166 136.7 L1181 128.7 L1196 120.0 L1196 121.4 L1181 130.4 L1166 138.5 L1151 146.0 L1136 152.7 L1121 158.6 L1106 163.9 L1091 168.5 L1076 172.5 L1062 176.0 L1047 178.8 L1032 181.2 L1017 183.1 L1002 184.6 L987 185.7 L972 186.5 L957 186.9 L942 187.0 L927 186.8 L912 186.4 L897 185.6 L882 184.7 L867 183.4 L852 181.9 L838 180.0 L823 177.9 L808 175.3 L793 172.3 L778 168.8 L763 164.6 L748 159.8 L733 154.2 L718 147.7Z" fill="#7c0000"/>
<path d="M718 146.8 L733 153.2 L748 158.7 L763 163.5 L778 167.5 L793 171.0 L808 174.0 L823 176.5 L838 178.7 L852 180.5 L867 182.0 L882 183.2 L897 184.2 L912 184.9 L927 185.4 L942 185.5 L957 185.4 L972 185.0 L987 184.3 L1002 183.2 L1017 181.7 L1032 179.9 L1047 177.5 L1062 174.7 L1076 171.3 L1091 167.3 L1106 162.7 L1121 157.5 L1136 151.7 L1151 145.1 L1166 137.7 L1181 129.6 L1196 120.8 L1196 122.2 L1181 131.3 L1166 139.6 L1151 147.2 L1136 154.0 L1121 160.0 L1106 165.4 L1091 170.1 L1076 174.2 L1062 177.7 L1047 180.6 L1032 183.0 L1017 185.0 L1002 186.5 L987 187.6 L972 188.4 L957 188.8 L942 188.9 L927 188.7 L912 188.2 L897 187.5 L882 186.5 L867 185.2 L852 183.7 L838 181.8 L823 179.6 L808 177.0 L793 173.9 L778 170.3 L763 166.1 L748 161.3 L733 155.6 L718 148.9Z" fill="#7e0000"/>
<path d="M718 148.0 L733 154.5 L748 160.2 L763 165.0 L778 169.1 L793 172.7 L808 175.7 L823 178.3 L838 180.5 L852 182.3 L867 183.8 L882 185.1 L897 186.1 L912 186.8 L927 187.2 L942 187.4 L957 187.3 L972 186.9 L987 186.2 L1002 185.1 L1017 183.6 L1032 181.6 L1047 179.2 L1062 176.4 L1076 172.9 L1091 168.9 L1106 164.2 L1121 158.9 L1136 153.0 L1151 146.2 L1166 138.8 L1181 130.6 L1196 121.6 L1196 122.9 L1181 132.2 L1166 140.7 L1151 148.4 L1136 155.3 L1121 161.4 L1106 166.9 L1091 171.7 L1076 175.8 L1062 179.4 L1047 182.3 L1032 184.8 L1017 186.8 L1002 188.3 L987 189.5 L972 190.2 L957 190.7 L942 190.8 L927 190.6 L912 190.1 L897 189.4 L882 188.4 L867 187.1 L852 185.5 L838 183.6 L823 181.3 L808 178.7 L793 175.6 L778 171.9 L763 167.7 L748 162.7 L733 156.9 L718 150.1Z" fill="#7e0000"/>
<path d="M718 149.2 L733 155.9 L748 161.6 L763 166.5 L778 170.7 L793 174.3 L808 177.4 L823 180.0 L838 182.2 L852 184.1 L867 185.7 L882 186.9 L897 187.9 L912 188.7 L927 189.1 L942 189.3 L957 189.2 L972 188.8 L987 188.0 L1002 186.9 L1017 185.4 L1032 183.4 L1047 181.0 L1062 178.1 L1076 174.6 L1091 170.5 L1106 165.7 L1121 160.4 L1136 154.3 L1151 147.4 L1166 139.9 L1181 131.5 L1196 122.3 L1196 123.7 L1181 133.1 L1166 141.7 L1151 149.5 L1136 156.6 L1121 162.8 L1106 168.4 L1091 173.2 L1076 177.5 L1062 181.1 L1047 184.1 L1032 186.6 L1017 188.6 L1002 190.2 L987 191.3 L972 192.1 L957 192.5 L942 192.7 L927 192.5 L912 192.0 L897 191.2 L882 190.2 L867 188.9 L852 187.3 L838 185.4 L823 183.1 L808 180.4 L793 177.2 L778 173.5 L763 169.2 L748 164.1 L733 158.2 L718 151.4Z" fill="#800000"/>
<path d="M718 150.4 L733 157.2 L748 163.0 L763 168.0 L778 172.3 L793 175.9 L808 179.1 L823 181.7 L838 184.0 L852 185.9 L867 187.5 L882 188.8 L897 189.8 L912 190.5 L927 191.0 L942 191.2 L957 191.1 L972 190.7 L987 189.9 L1002 188.8 L1017 187.2 L1032 185.2 L1047 182.7 L1062 179.8 L1076 176.2 L1091 172.0 L1106 167.2 L1121 161.8 L1136 155.6 L1151 148.6 L1166 140.9 L1181 132.4 L1196 123.1 L1196 124.5 L1181 134.1 L1166 142.8 L1151 150.7 L1136 157.9 L1121 164.2 L1106 169.9 L1091 174.8 L1076 179.1 L1062 182.8 L1047 185.8 L1032 188.4 L1017 190.4 L1002 192.0 L987 193.2 L972 194.0 L957 194.4 L942 194.5 L927 194.4 L912 193.9 L897 193.1 L882 192.1 L867 190.7 L852 189.1 L838 187.1 L823 184.8 L808 182.1 L793 178.8 L778 175.1 L763 170.7 L748 165.5 L733 159.6 L718 152.6Z" fill="#820000"/>
<path d="M718 151.6 L733 158.5 L748 164.4 L763 169.5 L778 173.9 L793 177.6 L808 180.8 L823 183.5 L838 185.8 L852 187.7 L867 189.3 L882 190.6 L897 191.7 L912 192.4 L927 192.9 L942 193.1 L957 193.0 L972 192.6 L987 191.8 L1002 190.6 L1017 189.0 L1032 187.0 L1047 184.5 L1062 181.5 L1076 177.8 L1091 173.6 L1106 168.7 L1121 163.2 L1136 156.9 L1151 149.8 L1166 142.0 L1181 133.3 L1196 123.9 L1196 125.2 L1181 135.0 L1166 143.9 L1151 151.9 L1136 159.2 L1121 165.6 L1106 171.4 L1091 176.4 L1076 180.7 L1062 184.5 L1047 187.6 L1032 190.2 L1017 192.3 L1002 193.9 L987 195.1 L972 195.9 L957 196.3 L942 196.4 L927 196.2 L912 195.7 L897 195.0 L882 193.9 L867 192.6 L852 190.9 L838 188.9 L823 186.5 L808 183.7 L793 180.5 L778 176.6 L763 172.2 L748 167.0 L733 160.9 L718 153.8Z" fill="#840000"/>
<path d="M718 152.9 L733 159.9 L748 165.9 L763 171.0 L778 175.4 L793 179.2 L808 182.4 L823 185.2 L838 187.5 L852 189.5 L867 191.1 L882 192.5 L897 193.5 L912 194.3 L927 194.8 L942 195.0 L957 194.9 L972 194.4 L987 193.6 L1002 192.5 L1017 190.9 L1032 188.8 L1047 186.2 L1062 183.2 L1076 179.5 L1091 175.2 L1106 170.2 L1121 164.6 L1136 158.2 L1151 151.0 L1166 143.1 L1181 134.3 L1196 124.7 L1196 125.4 L1181 135.2 L1166 144.1 L1151 152.2 L1136 159.5 L1121 166.0 L1106 171.7 L1091 176.8 L1076 181.1 L1062 184.9 L1047 188.0 L1032 190.6 L1017 192.7 L1002 194.3 L987 195.5 L972 196.3 L957 196.8 L942 196.9 L927 196.7 L912 196.2 L897 195.4 L882 194.3 L867 193.0 L852 191.3 L838 189.3 L823 186.9 L808 184.1 L793 180.9 L778 177.0 L763 172.5 L748 167.3 L733 161.2 L718 154.1Z" fill="#860000"/>
<mask id="mv"><rect x="718" y="76" width="480" height="130" fill="url(#valv)"/></mask>
<path d="M718 76 L718.0 154.1 L732.9 161.2 L747.9 167.3 L762.8 172.5 L777.8 177.0 L792.7 180.9 L807.6 184.1 L822.6 186.9 L837.5 189.3 L852.4 191.3 L867.4 193.0 L882.3 194.3 L897.2 195.4 L912.2 196.2 L927.1 196.7 L942.1 196.9 L957.0 196.8 L971.9 196.3 L986.9 195.5 L1001.8 194.3 L1016.8 192.7 L1031.7 190.6 L1046.6 188.0 L1061.6 184.9 L1076.5 181.1 L1091.4 176.8 L1106.4 171.7 L1121.3 166.0 L1136.2 159.5 L1151.2 152.2 L1166.1 144.1 L1181.1 135.2 L1196.0 125.4 L1196 76 Z" fill="url(#vald)" mask="url(#mv)"/>
<clipPath id="cv2"><path d="M718 76 L718.0 154.1 L732.9 161.2 L747.9 167.3 L762.8 172.5 L777.8 177.0 L792.7 180.9 L807.6 184.1 L822.6 186.9 L837.5 189.3 L852.4 191.3 L867.4 193.0 L882.3 194.3 L897.2 195.4 L912.2 196.2 L927.1 196.7 L942.1 196.9 L957.0 196.8 L971.9 196.3 L986.9 195.5 L1001.8 194.3 L1016.8 192.7 L1031.7 190.6 L1046.6 188.0 L1061.6 184.9 L1076.5 181.1 L1091.4 176.8 L1106.4 171.7 L1121.3 166.0 L1136.2 159.5 L1151.2 152.2 L1166.1 144.1 L1181.1 135.2 L1196.0 125.4 L1196 76 Z"/></clipPath>
<path d="M1206.5 184 L1206.5 640 L1214 973 L1216 993 L1256 993 L1256 184 Z" fill="url(#back)"/>
<path d="M1206.5 420 L1206.5 640 L1214 973 L1256 973 L1256 420 Z" fill="url(#backlo)"/>
<path d="M1206.5 560 L1206.5 640 L1214 973 L1231 973 L1224 560 Z" fill="url(#stripe)"/>
<path d="M1224 560 L1231 973 L1240 973 L1236 560 Z" fill="url(#stripe)" opacity=".35"/>
<path d="M1214 973 L1216 993 L1232 993 L1231 973 Z" fill="#a80000"/>
<path d="M1231 973 L1232 993 L1256 993 L1256 973 Z" fill="#5e0000"/>
<path d="M1171.9 76 L1173.6 87 L1175.6 97 L1177.7 108 L1180.2 119 L1182.9 129 L1186.0 140 L1189.4 151 L1193.3 161 L1197.6 172 L1202.5 183 L1208.0 193 L1214.1 204 L1220.9 215 L1228.6 225 L1237.1 236 L1246.5 247 L1280.5 247 L1271.1 236 L1262.6 225 L1254.9 215 L1248.1 204 L1242.0 193 L1236.5 183 L1231.6 172 L1227.3 161 L1223.4 151 L1220.0 140 L1216.9 129 L1214.2 119 L1211.7 108 L1209.6 97 L1207.6 87 L1205.9 76Z" fill="#1c0000" opacity=".8" filter="url(#b5)" clip-path="url(#cv2)"/>
<path d="M1171.9 76 L1173.6 87 L1175.6 97 L1177.7 108 L1180.2 119 L1182.9 129 L1186.0 140 L1189.4 151 L1193.3 161 L1197.6 172 L1202.5 183 L1208.0 193 L1214.1 204 L1220.9 215 L1228.6 225 L1237.1 236 L1246.5 247 L1280.5 247 L1271.1 236 L1262.6 225 L1254.9 215 L1248.1 204 L1242.0 193 L1236.5 183 L1231.6 172 L1227.3 161 L1223.4 151 L1220.0 140 L1216.9 129 L1214.2 119 L1211.7 108 L1209.6 97 L1207.6 87 L1205.9 76Z" fill="#2a0000" opacity=".75" filter="url(#b5)" clip-path="url(#cb)" transform="translate(-2 4)"/>
<path d="M1175.9 76 L1177.6 87 L1179.6 97 L1181.7 108 L1184.2 119 L1186.9 129 L1190.0 140 L1193.4 151 L1197.3 161 L1201.6 172 L1206.5 183 L1212.0 193 L1218.1 204 L1224.9 215 L1232.6 225 L1241.1 236 L1250.5 247 L1261.0 257 L1272.6 268 L1285.4 279 L1299.6 289 L1315.1 300 L1317.7 300 L1302.2 289 L1288.0 279 L1275.2 268 L1263.6 257 L1253.1 247 L1243.7 236 L1235.2 225 L1227.5 215 L1220.7 204 L1214.6 193 L1209.1 183 L1204.2 172 L1199.9 161 L1196.0 151 L1192.6 140 L1189.5 129 L1186.8 119 L1184.3 108 L1182.2 97 L1180.2 87 L1178.5 76Z" fill="#710000"/>
<path d="M1177.9 76 L1179.6 87 L1181.6 97 L1183.7 108 L1186.2 119 L1188.9 129 L1192.0 140 L1195.4 151 L1199.3 161 L1203.6 172 L1208.5 183 L1214.0 193 L1220.1 204 L1226.9 215 L1234.6 225 L1243.1 236 L1252.5 247 L1263.0 257 L1274.6 268 L1287.4 279 L1301.6 289 L1317.1 300 L1319.7 300 L1304.2 289 L1290.0 279 L1277.2 268 L1265.6 257 L1255.1 247 L1245.7 236 L1237.2 225 L1229.5 215 L1222.7 204 L1216.6 193 L1211.1 183 L1206.2 172 L1201.9 161 L1198.0 151 L1194.6 140 L1191.5 129 L1188.8 119 L1186.3 108 L1184.2 97 L1182.2 87 L1180.5 76Z" fill="#750000"/>
<path d="M1179.9 76 L1181.6 87 L1183.6 97 L1185.7 108 L1188.2 119 L1190.9 129 L1194.0 140 L1197.4 151 L1201.3 161 L1205.6 172 L1210.5 183 L1216.0 193 L1222.1 204 L1228.9 215 L1236.6 225 L1245.1 236 L1254.5 247 L1265.0 257 L1276.6 268 L1289.4 279 L1303.6 289 L1319.1 300 L1321.7 300 L1306.2 289 L1292.0 279 L1279.2 268 L1267.6 257 L1257.1 247 L1247.7 236 L1239.2 225 L1231.5 215 L1224.7 204 L1218.6 193 L1213.1 183 L1208.2 172 L1203.9 161 L1200.0 151 L1196.6 140 L1193.5 129 L1190.8 119 L1188.3 108 L1186.2 97 L1184.2 87 L1182.5 76Z" fill="#7a0000"/>
<path d="M1181.9 76 L1183.6 87 L1185.6 97 L1187.7 108 L1190.2 119 L1192.9 129 L1196.0 140 L1199.4 151 L1203.3 161 L1207.6 172 L1212.5 183 L1218.0 193 L1224.1 204 L1230.9 215 L1238.6 225 L1247.1 236 L1256.5 247 L1267.0 257 L1278.6 268 L1291.4 279 L1305.6 289 L1321.1 300 L1323.7 300 L1308.2 289 L1294.0 279 L1281.2 268 L1269.6 257 L1259.1 247 L1249.7 236 L1241.2 225 L1233.5 215 L1226.7 204 L1220.6 193 L1215.1 183 L1210.2 172 L1205.9 161 L1202.0 151 L1198.6 140 L1195.5 129 L1192.8 119 L1190.3 108 L1188.2 97 L1186.2 87 L1184.5 76Z" fill="#7c0000"/>
<path d="M1183.9 76 L1185.6 87 L1187.6 97 L1189.7 108 L1192.2 119 L1194.9 129 L1198.0 140 L1201.4 151 L1205.3 161 L1209.6 172 L1214.5 183 L1220.0 193 L1226.1 204 L1232.9 215 L1240.6 225 L1249.1 236 L1258.5 247 L1269.0 257 L1280.6 268 L1293.4 279 L1307.6 289 L1323.1 300 L1325.7 300 L1310.2 289 L1296.0 279 L1283.2 268 L1271.6 257 L1261.1 247 L1251.7 236 L1243.2 225 L1235.5 215 L1228.7 204 L1222.6 193 L1217.1 183 L1212.2 172 L1207.9 161 L1204.0 151 L1200.6 140 L1197.5 129 L1194.8 119 L1192.3 108 L1190.2 97 L1188.2 87 L1186.5 76Z" fill="#8b0000"/>
<path d="M1185.9 76 L1187.6 87 L1189.6 97 L1191.7 108 L1194.2 119 L1196.9 129 L1200.0 140 L1203.4 151 L1207.3 161 L1211.6 172 L1216.5 183 L1222.0 193 L1228.1 204 L1234.9 215 L1242.6 225 L1251.1 236 L1260.5 247 L1271.0 257 L1282.6 268 L1295.4 279 L1309.6 289 L1325.1 300 L1327.7 300 L1312.2 289 L1298.0 279 L1285.2 268 L1273.6 257 L1263.1 247 L1253.7 236 L1245.2 225 L1237.5 215 L1230.7 204 L1224.6 193 L1219.1 183 L1214.2 172 L1209.9 161 L1206.0 151 L1202.6 140 L1199.5 129 L1196.8 119 L1194.3 108 L1192.2 97 L1190.2 87 L1188.5 76Z" fill="#a10000"/>
<path d="M1187.9 76 L1189.6 87 L1191.6 97 L1193.7 108 L1196.2 119 L1198.9 129 L1202.0 140 L1205.4 151 L1209.3 161 L1213.6 172 L1218.5 183 L1224.0 193 L1230.1 204 L1236.9 215 L1244.6 225 L1253.1 236 L1262.5 247 L1273.0 257 L1284.6 268 L1297.4 279 L1311.6 289 L1327.1 300 L1329.7 300 L1314.2 289 L1300.0 279 L1287.2 268 L1275.6 257 L1265.1 247 L1255.7 236 L1247.2 225 L1239.5 215 L1232.7 204 L1226.6 193 L1221.1 183 L1216.2 172 L1211.9 161 L1208.0 151 L1204.6 140 L1201.5 129 L1198.8 119 L1196.3 108 L1194.2 97 L1192.2 87 L1190.5 76Z" fill="#aa0000"/>
<path d="M1189.9 76 L1191.6 87 L1193.6 97 L1195.7 108 L1198.2 119 L1200.9 129 L1204.0 140 L1207.4 151 L1211.3 161 L1215.6 172 L1220.5 183 L1226.0 193 L1232.1 204 L1238.9 215 L1246.6 225 L1255.1 236 L1264.5 247 L1275.0 257 L1286.6 268 L1299.4 279 L1313.6 289 L1329.1 300 L1331.7 300 L1316.2 289 L1302.0 279 L1289.2 268 L1277.6 257 L1267.1 247 L1257.7 236 L1249.2 225 L1241.5 215 L1234.7 204 L1228.6 193 L1223.1 183 L1218.2 172 L1213.9 161 L1210.0 151 L1206.6 140 L1203.5 129 L1200.8 119 L1198.3 108 L1196.2 97 L1194.2 87 L1192.5 76Z" fill="#b50101"/>
<path d="M1191.9 76 L1193.6 87 L1195.6 97 L1197.7 108 L1200.2 119 L1202.9 129 L1206.0 140 L1209.4 151 L1213.3 161 L1217.6 172 L1222.5 183 L1228.0 193 L1234.1 204 L1240.9 215 L1248.6 225 L1257.1 236 L1266.5 247 L1277.0 257 L1288.6 268 L1301.4 279 L1315.6 289 L1331.1 300 L1333.7 300 L1318.2 289 L1304.0 279 L1291.2 268 L1279.6 257 L1269.1 247 L1259.7 236 L1251.2 225 L1243.5 215 L1236.7 204 L1230.6 193 L1225.1 183 L1220.2 172 L1215.9 161 L1212.0 151 L1208.6 140 L1205.5 129 L1202.8 119 L1200.3 108 L1198.2 97 L1196.2 87 L1194.5 76Z" fill="#c50202"/>
<path d="M1193.9 76 L1195.6 87 L1197.6 97 L1199.7 108 L1202.2 119 L1204.9 129 L1208.0 140 L1211.4 151 L1215.3 161 L1219.6 172 L1224.5 183 L1230.0 193 L1236.1 204 L1242.9 215 L1250.6 225 L1259.1 236 L1268.5 247 L1279.0 257 L1290.6 268 L1303.4 279 L1317.6 289 L1333.1 300 L1335.7 300 L1320.2 289 L1306.0 279 L1293.2 268 L1281.6 257 L1271.1 247 L1261.7 236 L1253.2 225 L1245.5 215 L1238.7 204 L1232.6 193 L1227.1 183 L1222.2 172 L1217.9 161 L1214.0 151 L1210.6 140 L1207.5 129 L1204.8 119 L1202.3 108 L1200.2 97 L1198.2 87 L1196.5 76Z" fill="#cc0202"/>
<path d="M1195.9 76 L1197.6 87 L1199.6 97 L1201.7 108 L1204.2 119 L1206.9 129 L1210.0 140 L1213.4 151 L1217.3 161 L1221.6 172 L1226.5 183 L1232.0 193 L1238.1 204 L1244.9 215 L1252.6 225 L1261.1 236 L1270.5 247 L1281.0 257 L1292.6 268 L1305.4 279 L1319.6 289 L1335.1 300 L1337.7 300 L1322.2 289 L1308.0 279 L1295.2 268 L1283.6 257 L1273.1 247 L1263.7 236 L1255.2 225 L1247.5 215 L1240.7 204 L1234.6 193 L1229.1 183 L1224.2 172 L1219.9 161 L1216.0 151 L1212.6 140 L1209.5 129 L1206.8 119 L1204.3 108 L1202.2 97 L1200.2 87 L1198.5 76Z" fill="#c80101"/>
<path d="M1197.9 76 L1199.6 87 L1201.6 97 L1203.7 108 L1206.2 119 L1208.9 129 L1212.0 140 L1215.4 151 L1219.3 161 L1223.6 172 L1228.5 183 L1234.0 193 L1240.1 204 L1246.9 215 L1254.6 225 L1263.1 236 L1272.5 247 L1283.0 257 L1294.6 268 L1307.4 279 L1321.6 289 L1337.1 300 L1339.7 300 L1324.2 289 L1310.0 279 L1297.2 268 L1285.6 257 L1275.1 247 L1265.7 236 L1257.2 225 L1249.5 215 L1242.7 204 L1236.6 193 L1231.1 183 L1226.2 172 L1221.9 161 L1218.0 151 L1214.6 140 L1211.5 129 L1208.8 119 L1206.3 108 L1204.2 97 L1202.2 87 L1200.5 76Z" fill="#c30101"/>
<path d="M1199.9 76 L1201.6 87 L1203.6 97 L1205.7 108 L1208.2 119 L1210.9 129 L1214.0 140 L1217.4 151 L1221.3 161 L1225.6 172 L1230.5 183 L1236.0 193 L1242.1 204 L1248.9 215 L1256.6 225 L1265.1 236 L1274.5 247 L1285.0 257 L1296.6 268 L1309.4 279 L1323.6 289 L1339.1 300 L1341.7 300 L1326.2 289 L1312.0 279 L1299.2 268 L1287.6 257 L1277.1 247 L1267.7 236 L1259.2 225 L1251.5 215 L1244.7 204 L1238.6 193 L1233.1 183 L1228.2 172 L1223.9 161 L1220.0 151 L1216.6 140 L1213.5 129 L1210.8 119 L1208.3 108 L1206.2 97 L1204.2 87 L1202.5 76Z" fill="#be0000"/>
<path d="M1201.9 76 L1203.6 87 L1205.6 97 L1207.7 108 L1210.2 119 L1212.9 129 L1216.0 140 L1219.4 151 L1223.3 161 L1227.6 172 L1232.5 183 L1238.0 193 L1244.1 204 L1250.9 215 L1258.6 225 L1267.1 236 L1276.5 247 L1287.0 257 L1298.6 268 L1311.4 279 L1325.6 289 L1341.1 300 L1343.7 300 L1328.2 289 L1314.0 279 L1301.2 268 L1289.6 257 L1279.1 247 L1269.7 236 L1261.2 225 L1253.5 215 L1246.7 204 L1240.6 193 L1235.1 183 L1230.2 172 L1225.9 161 L1222.0 151 L1218.6 140 L1215.5 129 L1212.8 119 L1210.3 108 L1208.2 97 L1206.2 87 L1204.5 76Z" fill="#c20202"/>
<path d="M1203.9 76 L1205.6 87 L1207.6 97 L1209.7 108 L1212.2 119 L1214.9 129 L1218.0 140 L1221.4 151 L1225.3 161 L1229.6 172 L1234.5 183 L1240.0 193 L1246.1 204 L1252.9 215 L1260.6 225 L1269.1 236 L1278.5 247 L1289.0 257 L1300.6 268 L1313.4 279 L1327.6 289 L1343.1 300 L1345.7 300 L1330.2 289 L1316.0 279 L1303.2 268 L1291.6 257 L1281.1 247 L1271.7 236 L1263.2 225 L1255.5 215 L1248.7 204 L1242.6 193 L1237.1 183 L1232.2 172 L1227.9 161 L1224.0 151 L1220.6 140 L1217.5 129 L1214.8 119 L1212.3 108 L1210.2 97 L1208.2 87 L1206.5 76Z" fill="#d00a0a"/>
<path d="M1205.9 76 L1207.6 87 L1209.6 97 L1211.7 108 L1214.2 119 L1216.9 129 L1220.0 140 L1223.4 151 L1227.3 161 L1231.6 172 L1236.5 183 L1242.0 193 L1248.1 204 L1254.9 215 L1262.6 225 L1271.1 236 L1280.5 247 L1291.0 257 L1302.6 268 L1315.4 279 L1329.6 289 L1345.1 300 L1347.7 300 L1332.2 289 L1318.0 279 L1305.2 268 L1293.6 257 L1283.1 247 L1273.7 236 L1265.2 225 L1257.5 215 L1250.7 204 L1244.6 193 L1239.1 183 L1234.2 172 L1229.9 161 L1226.0 151 L1222.6 140 L1219.5 129 L1216.8 119 L1214.3 108 L1212.2 97 L1210.2 87 L1208.5 76Z" fill="#d60e0e"/>
<path d="M1207.9 76 L1209.6 87 L1211.6 97 L1213.7 108 L1216.2 119 L1218.9 129 L1222.0 140 L1225.4 151 L1229.3 161 L1233.6 172 L1238.5 183 L1244.0 193 L1250.1 204 L1256.9 215 L1264.6 225 L1273.1 236 L1282.5 247 L1293.0 257 L1304.6 268 L1317.4 279 L1331.6 289 L1347.1 300 L1349.7 300 L1334.2 289 L1320.0 279 L1307.2 268 L1295.6 257 L1285.1 247 L1275.7 236 L1267.2 225 L1259.5 215 L1252.7 204 L1246.6 193 L1241.1 183 L1236.2 172 L1231.9 161 L1228.0 151 L1224.6 140 L1221.5 129 L1218.8 119 L1216.3 108 L1214.2 97 L1212.2 87 L1210.5 76Z" fill="#cc0808"/>
<path d="M1209.9 76 L1211.6 87 L1213.6 97 L1215.7 108 L1218.2 119 L1220.9 129 L1224.0 140 L1227.4 151 L1231.3 161 L1235.6 172 L1240.5 183 L1246.0 193 L1252.1 204 L1258.9 215 L1266.6 225 L1275.1 236 L1284.5 247 L1295.0 257 L1306.6 268 L1319.4 279 L1333.6 289 L1349.1 300 L1351.7 300 L1336.2 289 L1322.0 279 L1309.2 268 L1297.6 257 L1287.1 247 L1277.7 236 L1269.2 225 L1261.5 215 L1254.7 204 L1248.6 193 L1243.1 183 L1238.2 172 L1233.9 161 L1230.0 151 L1226.6 140 L1223.5 129 L1220.8 119 L1218.3 108 L1216.2 97 L1214.2 87 L1212.5 76Z" fill="#c10101"/>
<path d="M1211.9 76 L1213.6 87 L1215.6 97 L1217.7 108 L1220.2 119 L1222.9 129 L1226.0 140 L1229.4 151 L1233.3 161 L1237.6 172 L1242.5 183 L1248.0 193 L1254.1 204 L1260.9 215 L1268.6 225 L1277.1 236 L1286.5 247 L1297.0 257 L1308.6 268 L1321.4 279 L1335.6 289 L1351.1 300 L1353.7 300 L1338.2 289 L1324.0 279 L1311.2 268 L1299.6 257 L1289.1 247 L1279.7 236 L1271.2 225 L1263.5 215 L1256.7 204 L1250.6 193 L1245.1 183 L1240.2 172 L1235.9 161 L1232.0 151 L1228.6 140 L1225.5 129 L1222.8 119 L1220.3 108 L1218.2 97 L1216.2 87 L1214.5 76Z" fill="#c10101"/>
<path d="M1213.9 76 L1215.6 87 L1217.6 97 L1219.7 108 L1222.2 119 L1224.9 129 L1228.0 140 L1231.4 151 L1235.3 161 L1239.6 172 L1244.5 183 L1250.0 193 L1256.1 204 L1262.9 215 L1270.6 225 L1279.1 236 L1288.5 247 L1299.0 257 L1310.6 268 L1323.4 279 L1337.6 289 L1353.1 300 L1355.7 300 L1340.2 289 L1326.0 279 L1313.2 268 L1301.6 257 L1291.1 247 L1281.7 236 L1273.2 225 L1265.5 215 L1258.7 204 L1252.6 193 L1247.1 183 L1242.2 172 L1237.9 161 L1234.0 151 L1230.6 140 L1227.5 129 L1224.8 119 L1222.3 108 L1220.2 97 L1218.2 87 L1216.5 76Z" fill="#c60303"/>
<path d="M1215.9 76 L1217.6 87 L1219.6 97 L1221.7 108 L1224.2 119 L1226.9 129 L1230.0 140 L1233.4 151 L1237.3 161 L1241.6 172 L1246.5 183 L1252.0 193 L1258.1 204 L1264.9 215 L1272.6 225 L1281.1 236 L1290.5 247 L1301.0 257 L1312.6 268 L1325.4 279 L1339.6 289 L1355.1 300 L1357.7 300 L1342.2 289 L1328.0 279 L1315.2 268 L1303.6 257 L1293.1 247 L1283.7 236 L1275.2 225 L1267.5 215 L1260.7 204 L1254.6 193 L1249.1 183 L1244.2 172 L1239.9 161 L1236.0 151 L1232.6 140 L1229.5 129 L1226.8 119 L1224.3 108 L1222.2 97 L1220.2 87 L1218.5 76Z" fill="#c80404"/>
<path d="M1217.9 76 L1219.6 87 L1221.6 97 L1223.7 108 L1226.2 119 L1228.9 129 L1232.0 140 L1235.4 151 L1239.3 161 L1243.6 172 L1248.5 183 L1254.0 193 L1260.1 204 L1266.9 215 L1274.6 225 L1283.1 236 L1292.5 247 L1303.0 257 L1314.6 268 L1327.4 279 L1341.6 289 L1357.1 300 L1359.7 300 L1344.2 289 L1330.0 279 L1317.2 268 L1305.6 257 L1295.1 247 L1285.7 236 L1277.2 225 L1269.5 215 L1262.7 204 L1256.6 193 L1251.1 183 L1246.2 172 L1241.9 161 L1238.0 151 L1234.6 140 L1231.5 129 L1228.8 119 L1226.3 108 L1224.2 97 L1222.2 87 L1220.5 76Z" fill="#d81515"/>
<path d="M1219.9 76 L1221.6 87 L1223.6 97 L1225.7 108 L1228.2 119 L1230.9 129 L1234.0 140 L1237.4 151 L1241.3 161 L1245.6 172 L1250.5 183 L1256.0 193 L1262.1 204 L1268.9 215 L1276.6 225 L1285.1 236 L1294.5 247 L1305.0 257 L1316.6 268 L1329.4 279 L1343.6 289 L1359.1 300 L1361.7 300 L1346.2 289 L1332.0 279 L1319.2 268 L1307.6 257 L1297.1 247 L1287.7 236 L1279.2 225 L1271.5 215 L1264.7 204 L1258.6 193 L1253.1 183 L1248.2 172 L1243.9 161 L1240.0 151 L1236.6 140 L1233.5 129 L1230.8 119 L1228.3 108 L1226.2 97 L1224.2 87 L1222.5 76Z" fill="#e22020"/>
<path d="M1221.9 76 L1223.6 87 L1225.6 97 L1227.7 108 L1230.2 119 L1232.9 129 L1236.0 140 L1239.4 151 L1243.3 161 L1247.6 172 L1252.5 183 L1258.0 193 L1264.1 204 L1270.9 215 L1278.6 225 L1287.1 236 L1296.5 247 L1307.0 257 L1318.6 268 L1331.4 279 L1345.6 289 L1361.1 300 L1363.7 300 L1348.2 289 L1334.0 279 L1321.2 268 L1309.6 257 L1299.1 247 L1289.7 236 L1281.2 225 L1273.5 215 L1266.7 204 L1260.6 193 L1255.1 183 L1250.2 172 L1245.9 161 L1242.0 151 L1238.6 140 L1235.5 129 L1232.8 119 L1230.3 108 L1228.2 97 L1226.2 87 L1224.5 76Z" fill="#d20f0f"/>
<path d="M1223.9 76 L1225.6 87 L1227.6 97 L1229.7 108 L1232.2 119 L1234.9 129 L1238.0 140 L1241.4 151 L1245.3 161 L1249.6 172 L1254.5 183 L1260.0 193 L1266.1 204 L1272.9 215 L1280.6 225 L1289.1 236 L1298.5 247 L1309.0 257 L1320.6 268 L1333.4 279 L1347.6 289 L1363.1 300 L1365.7 300 L1350.2 289 L1336.0 279 L1323.2 268 L1311.6 257 L1301.1 247 L1291.7 236 L1283.2 225 L1275.5 215 L1268.7 204 L1262.6 193 L1257.1 183 L1252.2 172 L1247.9 161 L1244.0 151 L1240.6 140 L1237.5 129 L1234.8 119 L1232.3 108 L1230.2 97 L1228.2 87 L1226.5 76Z" fill="#c80404"/>
<path d="M1225.9 76 L1227.6 87 L1229.6 97 L1231.7 108 L1234.2 119 L1236.9 129 L1240.0 140 L1243.4 151 L1247.3 161 L1251.6 172 L1256.5 183 L1262.0 193 L1268.1 204 L1274.9 215 L1282.6 225 L1291.1 236 L1300.5 247 L1311.0 257 L1322.6 268 L1335.4 279 L1349.6 289 L1365.1 300 L1367.7 300 L1352.2 289 L1338.0 279 L1325.2 268 L1313.6 257 L1303.1 247 L1293.7 236 L1285.2 225 L1277.5 215 L1270.7 204 L1264.6 193 L1259.1 183 L1254.2 172 L1249.9 161 L1246.0 151 L1242.6 140 L1239.5 129 L1236.8 119 L1234.3 108 L1232.2 97 L1230.2 87 L1228.5 76Z" fill="#c40303"/>
<path d="M1227.9 76 L1229.6 87 L1231.6 97 L1233.7 108 L1236.2 119 L1238.9 129 L1242.0 140 L1245.4 151 L1249.3 161 L1253.6 172 L1258.5 183 L1264.0 193 L1270.1 204 L1276.9 215 L1284.6 225 L1293.1 236 L1302.5 247 L1313.0 257 L1324.6 268 L1337.4 279 L1351.6 289 L1367.1 300 L1369.7 300 L1354.2 289 L1340.0 279 L1327.2 268 L1315.6 257 L1305.1 247 L1295.7 236 L1287.2 225 L1279.5 215 L1272.7 204 L1266.6 193 L1261.1 183 L1256.2 172 L1251.9 161 L1248.0 151 L1244.6 140 L1241.5 129 L1238.8 119 L1236.3 108 L1234.2 97 L1232.2 87 L1230.5 76Z" fill="#bc0202"/>
<path d="M1229.9 76 L1231.6 87 L1233.6 97 L1235.7 108 L1238.2 119 L1240.9 129 L1244.0 140 L1247.4 151 L1251.3 161 L1255.6 172 L1260.5 183 L1266.0 193 L1272.1 204 L1278.9 215 L1286.6 225 L1295.1 236 L1304.5 247 L1315.0 257 L1326.6 268 L1339.4 279 L1353.6 289 L1369.1 300 L1371.7 300 L1356.2 289 L1342.0 279 L1329.2 268 L1317.6 257 L1307.1 247 L1297.7 236 L1289.2 225 L1281.5 215 L1274.7 204 L1268.6 193 L1263.1 183 L1258.2 172 L1253.9 161 L1250.0 151 L1246.6 140 L1243.5 129 L1240.8 119 L1238.3 108 L1236.2 97 L1234.2 87 L1232.5 76Z" fill="#b50000"/>
<path d="M1231.9 76 L1233.6 87 L1235.6 97 L1237.7 108 L1240.2 119 L1242.9 129 L1246.0 140 L1249.4 151 L1253.3 161 L1257.6 172 L1262.5 183 L1268.0 193 L1274.1 204 L1280.9 215 L1288.6 225 L1297.1 236 L1306.5 247 L1317.0 257 L1328.6 268 L1341.4 279 L1355.6 289 L1371.1 300 L1373.7 300 L1358.2 289 L1344.0 279 L1331.2 268 L1319.6 257 L1309.1 247 L1299.7 236 L1291.2 225 L1283.5 215 L1276.7 204 L1270.6 193 L1265.1 183 L1260.2 172 L1255.9 161 L1252.0 151 L1248.6 140 L1245.5 129 L1242.8 119 L1240.3 108 L1238.2 97 L1236.2 87 L1234.5 76Z" fill="#b20000"/>
<path d="M1233.9 76 L1235.6 87 L1237.6 97 L1239.7 108 L1242.2 119 L1244.9 129 L1248.0 140 L1251.4 151 L1255.3 161 L1259.6 172 L1264.5 183 L1270.0 193 L1276.1 204 L1282.9 215 L1290.6 225 L1299.1 236 L1308.5 247 L1319.0 257 L1330.6 268 L1343.4 279 L1357.6 289 L1373.1 300 L1375.7 300 L1360.2 289 L1346.0 279 L1333.2 268 L1321.6 257 L1311.1 247 L1301.7 236 L1293.2 225 L1285.5 215 L1278.7 204 L1272.6 193 L1267.1 183 L1262.2 172 L1257.9 161 L1254.0 151 L1250.6 140 L1247.5 129 L1244.8 119 L1242.3 108 L1240.2 97 L1238.2 87 L1236.5 76Z" fill="#ad0000"/>
<path d="M1235.9 76 L1237.6 87 L1239.6 97 L1241.7 108 L1244.2 119 L1246.9 129 L1250.0 140 L1253.4 151 L1257.3 161 L1261.6 172 L1266.5 183 L1272.0 193 L1278.1 204 L1284.9 215 L1292.6 225 L1301.1 236 L1310.5 247 L1321.0 257 L1332.6 268 L1345.4 279 L1359.6 289 L1375.1 300 L1377.7 300 L1362.2 289 L1348.0 279 L1335.2 268 L1323.6 257 L1313.1 247 L1303.7 236 L1295.2 225 L1287.5 215 L1280.7 204 L1274.6 193 L1269.1 183 L1264.2 172 L1259.9 161 L1256.0 151 L1252.6 140 L1249.5 129 L1246.8 119 L1244.3 108 L1242.2 97 L1240.2 87 L1238.5 76Z" fill="#a40000"/>
<path d="M1237.9 76 L1239.6 87 L1241.6 97 L1243.7 108 L1246.2 119 L1248.9 129 L1252.0 140 L1255.4 151 L1259.3 161 L1263.6 172 L1268.5 183 L1274.0 193 L1280.1 204 L1286.9 215 L1294.6 225 L1303.1 236 L1312.5 247 L1323.0 257 L1334.6 268 L1347.4 279 L1361.6 289 L1377.1 300 L1379.7 300 L1364.2 289 L1350.0 279 L1337.2 268 L1325.6 257 L1315.1 247 L1305.7 236 L1297.2 225 L1289.5 215 L1282.7 204 L1276.6 193 L1271.1 183 L1266.2 172 L1261.9 161 L1258.0 151 L1254.6 140 L1251.5 129 L1248.8 119 L1246.3 108 L1244.2 97 L1242.2 87 L1240.5 76Z" fill="#9b0000"/>
<path d="M1239.9 76 L1241.6 87 L1243.6 97 L1245.7 108 L1248.2 119 L1250.9 129 L1254.0 140 L1257.4 151 L1261.3 161 L1265.6 172 L1270.5 183 L1276.0 193 L1282.1 204 L1288.9 215 L1296.6 225 L1305.1 236 L1314.5 247 L1325.0 257 L1336.6 268 L1349.4 279 L1363.6 289 L1379.1 300 L1381.7 300 L1366.2 289 L1352.0 279 L1339.2 268 L1327.6 257 L1317.1 247 L1307.7 236 L1299.2 225 L1291.5 215 L1284.7 204 L1278.6 193 L1273.1 183 L1268.2 172 L1263.9 161 L1260.0 151 L1256.6 140 L1253.5 129 L1250.8 119 L1248.3 108 L1246.2 97 L1244.2 87 L1242.5 76Z" fill="#980000"/>
<path d="M1241.9 76 L1243.6 87 L1245.6 97 L1247.7 108 L1250.2 119 L1252.9 129 L1256.0 140 L1259.4 151 L1263.3 161 L1267.6 172 L1272.5 183 L1278.0 193 L1284.1 204 L1290.9 215 L1298.6 225 L1307.1 236 L1316.5 247 L1327.0 257 L1338.6 268 L1351.4 279 L1365.6 289 L1381.1 300 L1383.7 300 L1368.2 289 L1354.0 279 L1341.2 268 L1329.6 257 L1319.1 247 L1309.7 236 L1301.2 225 L1293.5 215 L1286.7 204 L1280.6 193 L1275.1 183 L1270.2 172 L1265.9 161 L1262.0 151 L1258.6 140 L1255.5 129 L1252.8 119 L1250.3 108 L1248.2 97 L1246.2 87 L1244.5 76Z" fill="#940000"/>
<path d="M1243.9 76 L1245.6 87 L1247.6 97 L1249.7 108 L1252.2 119 L1254.9 129 L1258.0 140 L1261.4 151 L1265.3 161 L1269.6 172 L1274.5 183 L1280.0 193 L1286.1 204 L1292.9 215 L1300.6 225 L1309.1 236 L1318.5 247 L1329.0 257 L1340.6 268 L1353.4 279 L1367.6 289 L1383.1 300 L1385.7 300 L1370.2 289 L1356.0 279 L1343.2 268 L1331.6 257 L1321.1 247 L1311.7 236 L1303.2 225 L1295.5 215 L1288.7 204 L1282.6 193 L1277.1 183 L1272.2 172 L1267.9 161 L1264.0 151 L1260.6 140 L1257.5 129 L1254.8 119 L1252.3 108 L1250.2 97 L1248.2 87 L1246.5 76Z" fill="#8d0000"/>
<path d="M1245.9 76 L1247.6 87 L1249.6 97 L1251.7 108 L1254.2 119 L1256.9 129 L1260.0 140 L1263.4 151 L1267.3 161 L1271.6 172 L1276.5 183 L1282.0 193 L1288.1 204 L1294.9 215 L1302.6 225 L1311.1 236 L1320.5 247 L1331.0 257 L1342.6 268 L1355.4 279 L1369.6 289 L1385.1 300 L1387.7 300 L1372.2 289 L1358.0 279 L1345.2 268 L1333.6 257 L1323.1 247 L1313.7 236 L1305.2 225 L1297.5 215 L1290.7 204 L1284.6 193 L1279.1 183 L1274.2 172 L1269.9 161 L1266.0 151 L1262.6 140 L1259.5 129 L1256.8 119 L1254.3 108 L1252.2 97 L1250.2 87 L1248.5 76Z" fill="#880000"/>
<path d="M1247.9 76 L1249.6 87 L1251.6 97 L1253.7 108 L1256.2 119 L1258.9 129 L1262.0 140 L1265.4 151 L1269.3 161 L1273.6 172 L1278.5 183 L1284.0 193 L1290.1 204 L1296.9 215 L1304.6 225 L1313.1 236 L1322.5 247 L1333.0 257 L1344.6 268 L1357.4 279 L1371.6 289 L1387.1 300 L1389.7 300 L1374.2 289 L1360.0 279 L1347.2 268 L1335.6 257 L1325.1 247 L1315.7 236 L1307.2 225 L1299.5 215 L1292.7 204 L1286.6 193 L1281.1 183 L1276.2 172 L1271.9 161 L1268.0 151 L1264.6 140 L1261.5 129 L1258.8 119 L1256.3 108 L1254.2 97 L1252.2 87 L1250.5 76Z" fill="#890000"/>
<path d="M1249.9 76 L1251.6 87 L1253.6 97 L1255.7 108 L1258.2 119 L1260.9 129 L1264.0 140 L1267.4 151 L1271.3 161 L1275.6 172 L1280.5 183 L1286.0 193 L1292.1 204 L1298.9 215 L1306.6 225 L1315.1 236 L1324.5 247 L1335.0 257 L1346.6 268 L1359.4 279 L1373.6 289 L1389.1 300 L1391.7 300 L1376.2 289 L1362.0 279 L1349.2 268 L1337.6 257 L1327.1 247 L1317.7 236 L1309.2 225 L1301.5 215 L1294.7 204 L1288.6 193 L1283.1 183 L1278.2 172 L1273.9 161 L1270.0 151 L1266.6 140 L1263.5 129 L1260.8 119 L1258.3 108 L1256.2 97 L1254.2 87 L1252.5 76Z" fill="#8f0000"/>
<path d="M1251.9 76 L1253.6 87 L1255.6 97 L1257.7 108 L1260.2 119 L1262.9 129 L1266.0 140 L1269.4 151 L1273.3 161 L1277.6 172 L1282.5 183 L1288.0 193 L1294.1 204 L1300.9 215 L1308.6 225 L1317.1 236 L1326.5 247 L1337.0 257 L1348.6 268 L1361.4 279 L1375.6 289 L1391.1 300 L1393.7 300 L1378.2 289 L1364.0 279 L1351.2 268 L1339.6 257 L1329.1 247 L1319.7 236 L1311.2 225 L1303.5 215 L1296.7 204 L1290.6 193 L1285.1 183 L1280.2 172 L1275.9 161 L1272.0 151 L1268.6 140 L1265.5 129 L1262.8 119 L1260.3 108 L1258.2 97 L1256.2 87 L1254.5 76Z" fill="#970000"/>
<path d="M1253.9 76 L1255.6 87 L1257.6 97 L1259.7 108 L1262.2 119 L1264.9 129 L1268.0 140 L1271.4 151 L1275.3 161 L1279.6 172 L1284.5 183 L1290.0 193 L1296.1 204 L1302.9 215 L1310.6 225 L1319.1 236 L1328.5 247 L1339.0 257 L1350.6 268 L1363.4 279 L1377.6 289 L1393.1 300 L1395.7 300 L1380.2 289 L1366.0 279 L1353.2 268 L1341.6 257 L1331.1 247 L1321.7 236 L1313.2 225 L1305.5 215 L1298.7 204 L1292.6 193 L1287.1 183 L1282.2 172 L1277.9 161 L1274.0 151 L1270.6 140 L1267.5 129 L1264.8 119 L1262.3 108 L1260.2 97 L1258.2 87 L1256.5 76Z" fill="#9c0000"/>
<path d="M1255.9 76 L1257.6 87 L1259.6 97 L1261.7 108 L1264.2 119 L1266.9 129 L1270.0 140 L1273.4 151 L1277.3 161 L1281.6 172 L1286.5 183 L1292.0 193 L1298.1 204 L1304.9 215 L1312.6 225 L1321.1 236 L1330.5 247 L1341.0 257 L1352.6 268 L1365.4 279 L1379.6 289 L1395.1 300 L1397.7 300 L1382.2 289 L1368.0 279 L1355.2 268 L1343.6 257 L1333.1 247 L1323.7 236 L1315.2 225 L1307.5 215 L1300.7 204 L1294.6 193 L1289.1 183 L1284.2 172 L1279.9 161 L1276.0 151 L1272.6 140 L1269.5 129 L1266.8 119 L1264.3 108 L1262.2 97 L1260.2 87 L1258.5 76Z" fill="#9c0000"/>
<path d="M1257.9 76 L1259.6 87 L1261.6 97 L1263.7 108 L1266.2 119 L1268.9 129 L1272.0 140 L1275.4 151 L1279.3 161 L1283.6 172 L1288.5 183 L1294.0 193 L1300.1 204 L1306.9 215 L1314.6 225 L1323.1 236 L1332.5 247 L1343.0 257 L1354.6 268 L1367.4 279 L1381.6 289 L1397.1 300 L1399.7 300 L1384.2 289 L1370.0 279 L1357.2 268 L1345.6 257 L1335.1 247 L1325.7 236 L1317.2 225 L1309.5 215 L1302.7 204 L1296.6 193 L1291.1 183 L1286.2 172 L1281.9 161 L1278.0 151 L1274.6 140 L1271.5 129 L1268.8 119 L1266.3 108 L1264.2 97 L1262.2 87 L1260.5 76Z" fill="#9d0000"/>
</g>
<rect x="718" y="76" width="30" height="1138" fill="url(#lsh)"/>
<linearGradient id="tg0" x1="0" x2="1" y1="0" y2="0"><stop offset="0" stop-color="#cc8e4e"/><stop offset="1" stop-color="#c48749"/></linearGradient>
<linearGradient id="te0" x1="0" x2="1" y1="0" y2="0"><stop offset="0" stop-color="#af7a43"/><stop offset="1" stop-color="#a8743f"/></linearGradient>
<linearGradient id="tg1" x1="0" x2="1" y1="0" y2="0"><stop offset="0" stop-color="#c6894b"/><stop offset="1" stop-color="#985f2c"/></linearGradient>
<linearGradient id="te1" x1="0" x2="1" y1="0" y2="0"><stop offset="0" stop-color="#ab7640"/><stop offset="1" stop-color="#835226"/></linearGradient>
<linearGradient id="tg2" x1="0" x2="1" y1="0" y2="0"><stop offset="0" stop-color="#9b612e"/><stop offset="1" stop-color="#6d3f1a"/></linearGradient>
<linearGradient id="te2" x1="0" x2="1" y1="0" y2="0"><stop offset="0" stop-color="#855427"/><stop offset="1" stop-color="#5e3617"/></linearGradient>
<linearGradient id="tg3" x1="0" x2="1" y1="0" y2="0"><stop offset="0" stop-color="#cc8e4e"/><stop offset="1" stop-color="#c78a4b"/></linearGradient>
<linearGradient id="te3" x1="0" x2="1" y1="0" y2="0"><stop offset="0" stop-color="#af7a43"/><stop offset="1" stop-color="#ab7741"/></linearGradient>
<linearGradient id="tg4" x1="0" x2="1" y1="0" y2="0"><stop offset="0" stop-color="#c78a4b"/><stop offset="1" stop-color="#99602d"/></linearGradient>
<linearGradient id="te4" x1="0" x2="1" y1="0" y2="0"><stop offset="0" stop-color="#ab7741"/><stop offset="1" stop-color="#845327"/></linearGradient>
<linearGradient id="tg5" x1="0" x2="1" y1="0" y2="0"><stop offset="0" stop-color="#99602d"/><stop offset="1" stop-color="#6c3e1a"/></linearGradient>
<linearGradient id="te5" x1="0" x2="1" y1="0" y2="0"><stop offset="0" stop-color="#845227"/><stop offset="1" stop-color="#5d3516"/></linearGradient>
<text font-family="'Noto Sans CJK JP','Liberation Sans',sans-serif" font-weight="900" font-size="84" text-anchor="middle" transform="translate(5 5.5) translate(858 632) rotate(-4) scale(0.93 1.03)" fill="#000" opacity=".3" stroke="#000" stroke-width="5" stroke-linejoin="round" filter="url(#b1)">タ</text>
<text font-family="'Noto Sans CJK JP','Liberation Sans',sans-serif" font-weight="900" font-size="84" text-anchor="middle" transform="translate(2 6) translate(936.5 632) rotate(0) scale(1.04 1.03)" fill="#000" opacity=".3" stroke="#000" stroke-width="5" stroke-linejoin="round" filter="url(#b1)">イ</text>
<text font-family="'Noto Sans CJK JP','Liberation Sans',sans-serif" font-weight="900" font-size="84" text-anchor="middle" transform="translate(-2.5 5) translate(1011 631) rotate(3) scale(0.98 1.03)" fill="#000" opacity=".3" stroke="#000" stroke-width="5" stroke-linejoin="round" filter="url(#b1)">ム</text>
<text font-family="'Noto Sans CJK JP','Liberation Sans',sans-serif" font-weight="900" font-size="84" text-anchor="middle" transform="translate(4.5 2) translate(850 725) rotate(0) scale(0.97 0.99)" fill="#000" opacity=".3" stroke="#000" stroke-width="5" stroke-linejoin="round" filter="url(#b1)">セ</text>
<text font-family="'Noto Sans CJK JP','Liberation Sans',sans-serif" font-weight="900" font-size="84" text-anchor="middle" transform="translate(1.5 1) translate(933.5 725) rotate(0) scale(0.96 0.99)" fill="#000" opacity=".3" stroke="#000" stroke-width="5" stroke-linejoin="round" filter="url(#b1)">ー</text>
<text font-family="'Noto Sans CJK JP','Liberation Sans',sans-serif" font-weight="900" font-size="84" text-anchor="middle" transform="translate(-3 2.5) translate(1018 725) rotate(0) scale(1.04 0.99)" fill="#000" opacity=".3" stroke="#000" stroke-width="5" stroke-linejoin="round" filter="url(#b1)">ル</text>
<text font-family="'Noto Sans CJK JP','Liberation Sans',sans-serif" font-weight="900" font-size="84" text-anchor="middle" transform="translate(4 2.5) translate(858 632) rotate(-4) scale(0.93 1.03)" fill="#2e1c0e" stroke="#2e1c0e" stroke-width="5.4" stroke-linejoin="miter">タ</text>
<text font-family="'Noto Sans CJK JP','Liberation Sans',sans-serif" font-weight="900" font-size="84" text-anchor="middle" transform="translate(4.00 2.50) translate(858 632) rotate(-4) scale(0.93 1.03)" fill="url(#te0)" stroke="url(#te0)" stroke-width="3" stroke-linejoin="miter">タ</text>
<text font-family="'Noto Sans CJK JP','Liberation Sans',sans-serif" font-weight="900" font-size="84" text-anchor="middle" transform="translate(2.64 1.65) translate(858 632) rotate(-4) scale(0.93 1.03)" fill="url(#te0)" stroke="url(#te0)" stroke-width="3" stroke-linejoin="miter">タ</text>
<text font-family="'Noto Sans CJK JP','Liberation Sans',sans-serif" font-weight="900" font-size="84" text-anchor="middle" transform="translate(1.32 0.83) translate(858 632) rotate(-4) scale(0.93 1.03)" fill="url(#te0)" stroke="url(#te0)" stroke-width="3" stroke-linejoin="miter">タ</text>
<text font-family="'Noto Sans CJK JP','Liberation Sans',sans-serif" font-weight="900" font-size="84" text-anchor="middle" transform="translate(1 3) translate(936.5 632) rotate(0) scale(1.04 1.03)" fill="#2e1c0e" stroke="#2e1c0e" stroke-width="5.4" stroke-linejoin="miter">イ</text>
<text font-family="'Noto Sans CJK JP','Liberation Sans',sans-serif" font-weight="900" font-size="84" text-anchor="middle" transform="translate(1.00 3.00) translate(936.5 632) rotate(0) scale(1.04 1.03)" fill="url(#te1)" stroke="url(#te1)" stroke-width="3" stroke-linejoin="miter">イ</text>
<text font-family="'Noto Sans CJK JP','Liberation Sans',sans-serif" font-weight="900" font-size="84" text-anchor="middle" transform="translate(0.66 1.98) translate(936.5 632) rotate(0) scale(1.04 1.03)" fill="url(#te1)" stroke="url(#te1)" stroke-width="3" stroke-linejoin="miter">イ</text>
<text font-family="'Noto Sans CJK JP','Liberation Sans',sans-serif" font-weight="900" font-size="84" text-anchor="middle" transform="translate(0.33 0.99) translate(936.5 632) rotate(0) scale(1.04 1.03)" fill="url(#te1)" stroke="url(#te1)" stroke-width="3" stroke-linejoin="miter">イ</text>
<text font-family="'Noto Sans CJK JP','Liberation Sans',sans-serif" font-weight="900" font-size="84" text-anchor="middle" transform="translate(-3.5 2) translate(1011 631) rotate(3) scale(0.98 1.03)" fill="#2e1c0e" stroke="#2e1c0e" stroke-width="5.4" stroke-linejoin="miter">ム</text>
<text font-family="'Noto Sans CJK JP','Liberation Sans',sans-serif" font-weight="900" font-size="84" text-anchor="middle" transform="translate(-3.50 2.00) translate(1011 631) rotate(3) scale(0.98 1.03)" fill="url(#te2)" stroke="url(#te2)" stroke-width="3" stroke-linejoin="miter">ム</text>
<text font-family="'Noto Sans CJK JP','Liberation Sans',sans-serif" font-weight="900" font-size="84" text-anchor="middle" transform="translate(-2.31 1.32) translate(1011 631) rotate(3) scale(0.98 1.03)" fill="url(#te2)" stroke="url(#te2)" stroke-width="3" stroke-linejoin="miter">ム</text>
<text font-family="'Noto Sans CJK JP','Liberation Sans',sans-serif" font-weight="900" font-size="84" text-anchor="middle" transform="translate(-1.16 0.66) translate(1011 631) rotate(3) scale(0.98 1.03)" fill="url(#te2)" stroke="url(#te2)" stroke-width="3" stroke-linejoin="miter">ム</text>
<text font-family="'Noto Sans CJK JP','Liberation Sans',sans-serif" font-weight="900" font-size="84" text-anchor="middle" transform="translate(3.5 -1) translate(850 725) rotate(0) scale(0.97 0.99)" fill="#2e1c0e" stroke="#2e1c0e" stroke-width="5.4" stroke-linejoin="miter">セ</text>
<text font-family="'Noto Sans CJK JP','Liberation Sans',sans-serif" font-weight="900" font-size="84" text-anchor="middle" transform="translate(3.50 -1.00) translate(850 725) rotate(0) scale(0.97 0.99)" fill="url(#te3)" stroke="url(#te3)" stroke-width="3" stroke-linejoin="miter">セ</text>
<text font-family="'Noto Sans CJK JP','Liberation Sans',sans-serif" font-weight="900" font-size="84" text-anchor="middle" transform="translate(2.31 -0.66) translate(850 725) rotate(0) scale(0.97 0.99)" fill="url(#te3)" stroke="url(#te3)" stroke-width="3" stroke-linejoin="miter">セ</text>
<text font-family="'Noto Sans CJK JP','Liberation Sans',sans-serif" font-weight="900" font-size="84" text-anchor="middle" transform="translate(1.16 -0.33) translate(850 725) rotate(0) scale(0.97 0.99)" fill="url(#te3)" stroke="url(#te3)" stroke-width="3" stroke-linejoin="miter">セ</text>
<text font-family="'Noto Sans CJK JP','Liberation Sans',sans-serif" font-weight="900" font-size="84" text-anchor="middle" transform="translate(0.5 -2) translate(933.5 725) rotate(0) scale(0.96 0.99)" fill="#2e1c0e" stroke="#2e1c0e" stroke-width="5.4" stroke-linejoin="miter">ー</text>
<text font-family="'Noto Sans CJK JP','Liberation Sans',sans-serif" font-weight="900" font-size="84" text-anchor="middle" transform="translate(0.50 -2.00) translate(933.5 725) rotate(0) scale(0.96 0.99)" fill="url(#te4)" stroke="url(#te4)" stroke-width="3" stroke-linejoin="miter">ー</text>
<text font-family="'Noto Sans CJK JP','Liberation Sans',sans-serif" font-weight="900" font-size="84" text-anchor="middle" transform="translate(0.33 -1.32) translate(933.5 725) rotate(0) scale(0.96 0.99)" fill="url(#te4)" stroke="url(#te4)" stroke-width="3" stroke-linejoin="miter">ー</text>
<text font-family="'Noto Sans CJK JP','Liberation Sans',sans-serif" font-weight="900" font-size="84" text-anchor="middle" transform="translate(0.17 -0.66) translate(933.5 725) rotate(0) scale(0.96 0.99)" fill="url(#te4)" stroke="url(#te4)" stroke-width="3" stroke-linejoin="miter">ー</text>
<text font-family="'Noto Sans CJK JP','Liberation Sans',sans-serif" font-weight="900" font-size="84" text-anchor="middle" transform="translate(-4 -0.5) translate(1018 725) rotate(0) scale(1.04 0.99)" fill="#2e1c0e" stroke="#2e1c0e" stroke-width="5.4" stroke-linejoin="miter">ル</text>
<text font-family="'Noto Sans CJK JP','Liberation Sans',sans-serif" font-weight="900" font-size="84" text-anchor="middle" transform="translate(-4.00 -0.50) translate(1018 725) rotate(0) scale(1.04 0.99)" fill="url(#te5)" stroke="url(#te5)" stroke-width="3" stroke-linejoin="miter">ル</text>
<text font-family="'Noto Sans CJK JP','Liberation Sans',sans-serif" font-weight="900" font-size="84" text-anchor="middle" transform="translate(-2.64 -0.33) translate(1018 725) rotate(0) scale(1.04 0.99)" fill="url(#te5)" stroke="url(#te5)" stroke-width="3" stroke-linejoin="miter">ル</text>
<text font-family="'Noto Sans CJK JP','Liberation Sans',sans-serif" font-weight="900" font-size="84" text-anchor="middle" transform="translate(-1.32 -0.17) translate(1018 725) rotate(0) scale(1.04 0.99)" fill="url(#te5)" stroke="url(#te5)" stroke-width="3" stroke-linejoin="miter">ル</text>
<text font-family="'Noto Sans CJK JP','Liberation Sans',sans-serif" font-weight="900" font-size="84" text-anchor="middle" transform="translate(858 632) rotate(-4) scale(0.93 1.03)" fill="#2e1c0e" stroke="#2e1c0e" stroke-width="5.2" stroke-linejoin="miter">タ</text>
<text font-family="'Noto Sans CJK JP','Liberation Sans',sans-serif" font-weight="900" font-size="84" text-anchor="middle" transform="translate(858 632) rotate(-4) scale(0.93 1.03)" fill="url(#tg0)" stroke="url(#tg0)" stroke-width="2.2" stroke-linejoin="miter">タ</text>
<text font-family="'Noto Sans CJK JP','Liberation Sans',sans-serif" font-weight="900" font-size="84" text-anchor="middle" transform="translate(936.5 632) rotate(0) scale(1.04 1.03)" fill="#2e1c0e" stroke="#2e1c0e" stroke-width="5.2" stroke-linejoin="miter">イ</text>
<text font-family="'Noto Sans CJK JP','Liberation Sans',sans-serif" font-weight="900" font-size="84" text-anchor="middle" transform="translate(936.5 632) rotate(0) scale(1.04 1.03)" fill="url(#tg1)" stroke="url(#tg1)" stroke-width="2.2" stroke-linejoin="miter">イ</text>
<text font-family="'Noto Sans CJK JP','Liberation Sans',sans-serif" font-weight="900" font-size="84" text-anchor="middle" transform="translate(1011 631) rotate(3) scale(0.98 1.03)" fill="#2e1c0e" stroke="#2e1c0e" stroke-width="5.2" stroke-linejoin="miter">ム</text>
<text font-family="'Noto Sans CJK JP','Liberation Sans',sans-serif" font-weight="900" font-size="84" text-anchor="middle" transform="translate(1011 631) rotate(3) scale(0.98 1.03)" fill="url(#tg2)" stroke="url(#tg2)" stroke-width="2.2" stroke-linejoin="miter">ム</text>
<text font-family="'Noto Sans CJK JP','Liberation Sans',sans-serif" font-weight="900" font-size="84" text-anchor="middle" transform="translate(850 725) rotate(0) scale(0.97 0.99)" fill="#2e1c0e" stroke="#2e1c0e" stroke-width="5.2" stroke-linejoin="miter">セ</text>
<text font-family="'Noto Sans CJK JP','Liberation Sans',sans-serif" font-weight="900" font-size="84" text-anchor="middle" transform="translate(850 725) rotate(0) scale(0.97 0.99)" fill="url(#tg3)" stroke="url(#tg3)" stroke-width="2.2" stroke-linejoin="miter">セ</text>
<text font-family="'Noto Sans CJK JP','Liberation Sans',sans-serif" font-weight="900" font-size="84" text-anchor="middle" transform="translate(933.5 725) rotate(0) scale(0.96 0.99)" fill="#2e1c0e" stroke="#2e1c0e" stroke-width="5.2" stroke-linejoin="miter">ー</text>
<text font-family="'Noto Sans CJK JP','Liberation Sans',sans-serif" font-weight="900" font-size="84" text-anchor="middle" transform="translate(933.5 725) rotate(0) scale(0.96 0.99)" fill="url(#tg4)" stroke="url(#tg4)" stroke-width="2.2" stroke-linejoin="miter">ー</text>
<text font-family="'Noto Sans CJK JP','Liberation Sans',sans-serif" font-weight="900" font-size="84" text-anchor="middle" transform="translate(1018 725) rotate(0) scale(1.04 0.99)" fill="#2e1c0e" stroke="#2e1c0e" stroke-width="5.2" stroke-linejoin="miter">ル</text>
<text font-family="'Noto Sans CJK JP','Liberation Sans',sans-serif" font-weight="900" font-size="84" text-anchor="middle" transform="translate(1018 725) rotate(0) scale(1.04 0.99)" fill="url(#tg5)" stroke="url(#tg5)" stroke-width="2.2" stroke-linejoin="miter">ル</text>
</svg>
</body></html>
